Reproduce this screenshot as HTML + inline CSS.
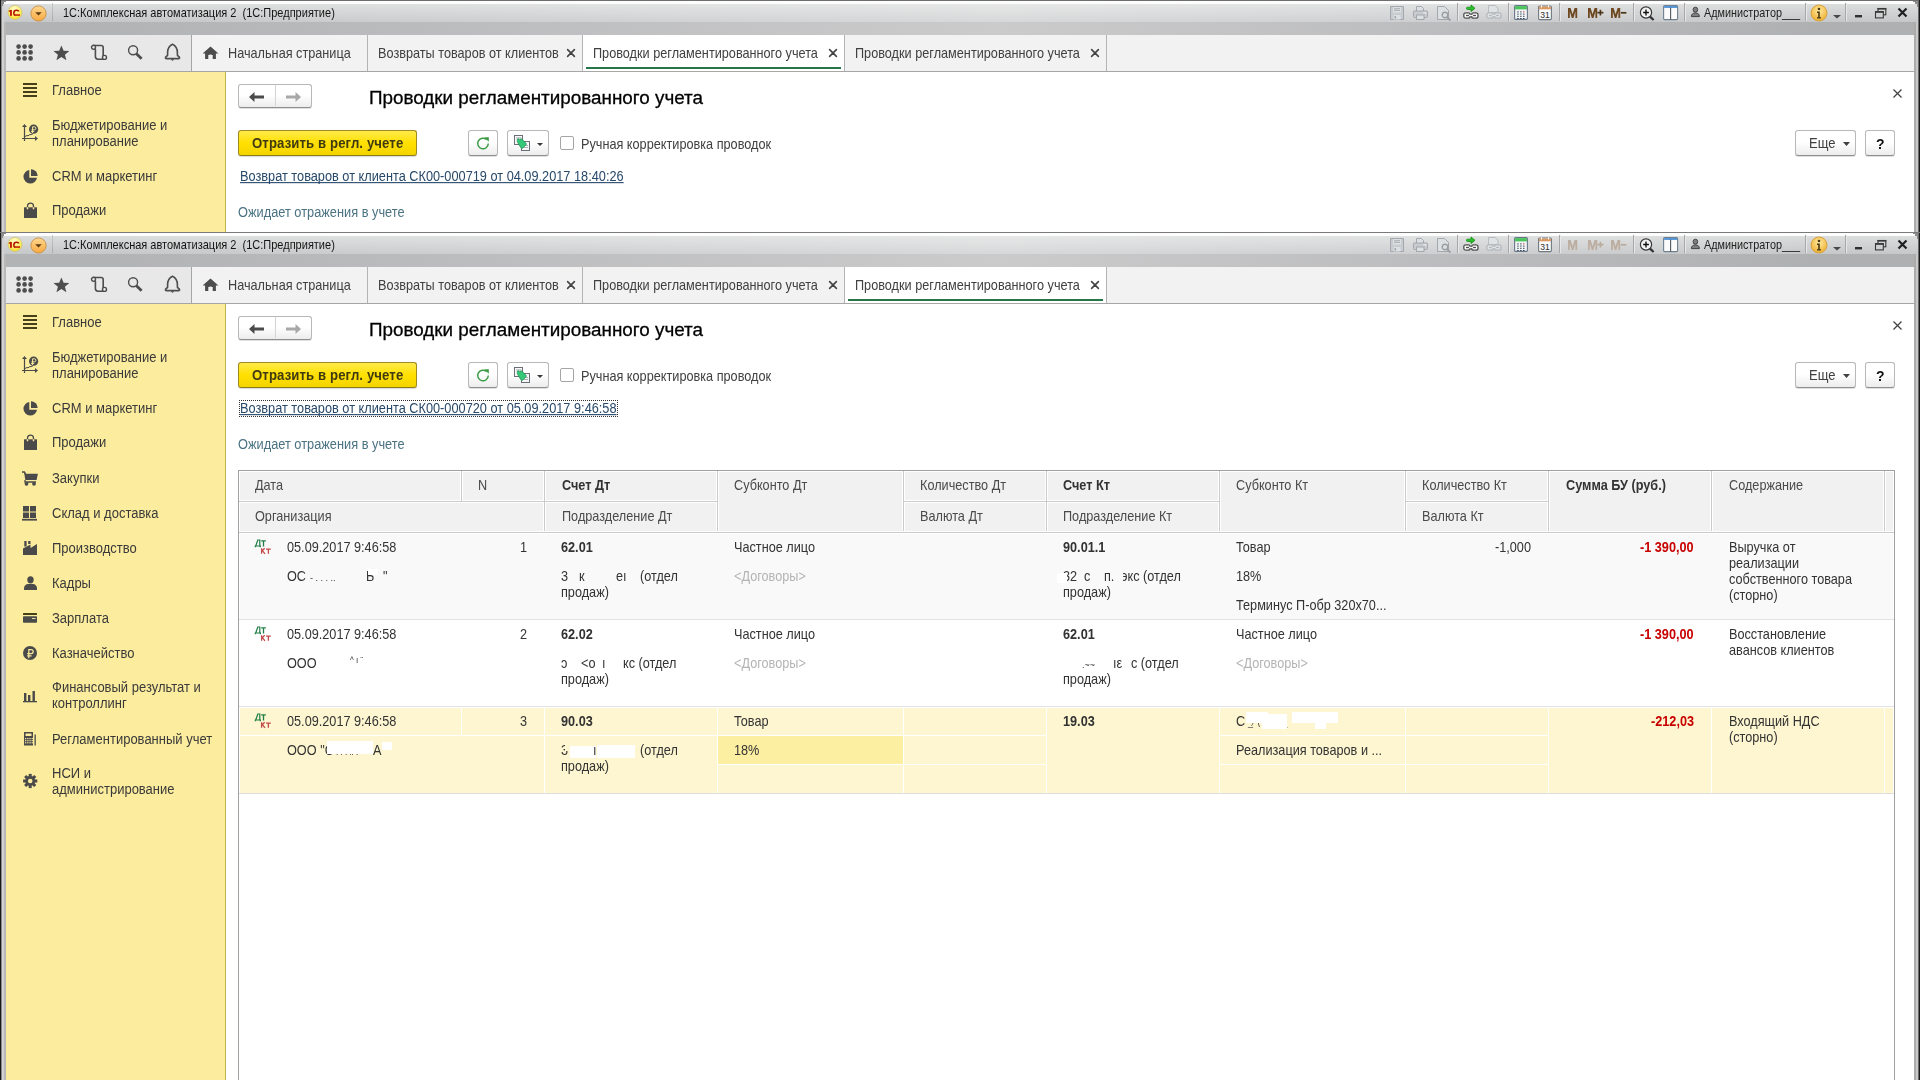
<!DOCTYPE html><html><head><meta charset="utf-8"><style>
html,body{margin:0;padding:0;width:1920px;height:1080px;overflow:hidden;background:#fff;}
body{position:relative;font-family:"Liberation Sans", sans-serif;}
.t{position:absolute;white-space:nowrap;font-family:"Liberation Sans", sans-serif;will-change:transform;}
.r{position:absolute;}
.s{position:absolute;overflow:visible;}
.btn{position:absolute;border:1px solid #b8b8b8;border-bottom-color:#8e8e8e;border-radius:3px;background:linear-gradient(#ffffff 45%,#ededed);box-shadow:0 1px 0 rgba(0,0,0,0.12);}
.ybtn{position:absolute;border:1px solid #a08c1e;border-bottom-color:#8e7c18;border-radius:3px;background:linear-gradient(#ffea4c,#ffe000 50%,#f4d400);box-shadow:0 1px 1px rgba(0,0,0,0.15);}
.cb{position:absolute;border:1px solid #a6a6a6;border-radius:2px;background:#fff;}
</style></head><body>
<div class="r" style="left:0px;top:0px;width:1920px;height:1px;background:#6e6e6e;"></div>
<div class="r" style="left:0px;top:1px;width:1920px;height:3px;background:#fdfdfd;"></div>
<div class="r" style="left:0px;top:4px;width:1920px;height:18px;background:linear-gradient(90deg,rgba(255,255,255,0) 5%,rgba(255,255,255,0.3) 52%,rgba(255,255,255,0) 95%),linear-gradient(#dcdddd,#c6c7c9);"></div>
<div class="r" style="left:0px;top:22px;width:1920px;height:13px;background:linear-gradient(90deg,#b2b3b5 5%,#cbcbcc 52%,#afb0b2 95%);"></div>
<svg class="s" style="left:7px;top:5px;" width="17" height="17" viewBox="0 0 17 17"><defs><radialGradient id="lg" cx="45%" cy="25%" r="80%"><stop offset="0" stop-color="#fffcc8"/><stop offset="0.55" stop-color="#fff070"/><stop offset="1" stop-color="#fad820"/></radialGradient></defs><circle cx="8" cy="7.4" r="7" fill="url(#lg)" stroke="#c8c070" stroke-width="0.7"/><rect x="3" y="5" width="1.9" height="5.8" fill="#c01a08"/><path d="M1.9 6.7l1.5-1.5" stroke="#c01a08" stroke-width="1.2"/><path d="M11.6 6.6Q11.6 5.3 9.6 5.3Q6.8 5.3 6.8 7.9Q6.8 10.2 8.4 10.2" stroke="#b01000" stroke-width="1.5" fill="none"/><rect x="7.6" y="9.3" width="5.4" height="1.5" fill="#c01a08"/></svg>
<svg class="s" style="left:30px;top:5px;" width="17" height="17" viewBox="0 0 17 17"><defs><linearGradient id="dg" x1="0" y1="0" x2="0" y2="1"><stop offset="0" stop-color="#ffd890"/><stop offset="1" stop-color="#f8a840"/></linearGradient></defs><circle cx="8.5" cy="8.5" r="7.6" fill="url(#dg)" stroke="#c89040" stroke-width="0.9"/><path d="M5.2 7.2h6.6l-3.3 3.4z" fill="#5a3a10"/></svg>
<div class="r" style="left:52px;top:3px;width:1px;height:18px;background:linear-gradient(#c8c8c8,#a8a8a8);"></div>
<div class="t" style="left:63px;top:6.36px;font-size:11px;line-height:14px;color:#141414;transform:scaleY(1.12);transform-origin:0 10.64px;">1С:Комплексная автоматизация 2&nbsp; (1С:Предприятие)</div>
<svg class="s" style="left:1390px;top:6px;" width="14" height="14" viewBox="0 0 14 14"><path d="M.5 .5h13v13h-13z" fill="#c8ccd0" stroke="#a4a8ac"/><rect x="3" y="1" width="8" height="5.5" fill="#dde0e3"/><path d="M4 2.7h6M4 4.4h6" stroke="#a4a8ac" stroke-width=".9"/><rect x="3.5" y="9" width="7" height="4.5" fill="#dde0e3"/><rect x="4.5" y="10" width="1.6" height="2.6" fill="#a4a8ac"/></svg>
<svg class="s" style="left:1413px;top:6px;" width="15" height="14" viewBox="0 0 15 14"><path d="M3.5 .5h5l2 2v3h-7z" fill="#dde0e3" stroke="#a4a8ac"/><rect x=".5" y="5" width="14" height="6.5" rx="1" fill="#c8ccd0" stroke="#a4a8ac"/><rect x="3.5" y="9" width="7.5" height="4.5" fill="#dde0e3" stroke="#a4a8ac"/><rect x="10.5" y="6.3" width="1.2" height="1" fill="#fff"/><rect x="12.2" y="6.3" width="1.2" height="1" fill="#fff"/></svg>
<svg class="s" style="left:1437px;top:6px;" width="15" height="16" viewBox="0 0 15 16"><path d="M.5 .5h7l4 4v9h-11z" fill="#dde0e3" stroke="#a4a8ac"/><circle cx="8" cy="9" r="2.8" fill="#dde0e3" stroke="#9a9ea2" stroke-width="1.4"/><path d="M10 11l3.5 3.6" stroke="#9a9ea2" stroke-width="1.8"/></svg>
<div class="r" style="left:1457px;top:3px;width:1px;height:18px;background:#a8a8a8;"></div>
<div class="r" style="left:1458px;top:3px;width:1px;height:18px;background:#e8e8e8;"></div>
<svg class="s" style="left:1463px;top:4px;" width="17" height="16" viewBox="0 0 17 16"><path d="M4.6 3.2h3.4V1l4 3.3-4 3.3V5.5H4.6a1.15 1.15 0 0 1 0-2.3z" fill="#2cc02c" stroke="#108a10" stroke-width=".8"/><rect x=".8" y="8.8" width="6.4" height="5.4" rx="2" fill="#f8f8f8" stroke="#505050" stroke-width="1.3"/><rect x="8.6" y="8.8" width="6.4" height="5.4" rx="2" fill="#f8f8f8" stroke="#505050" stroke-width="1.3"/><path d="M3 11.5h10" stroke="#505050" stroke-width="1.3"/><path d="M6 11.5h4" stroke="#f8f8f8" stroke-width="1.2"/></svg>
<svg class="s" style="left:1486px;top:4px;" width="17" height="16" viewBox="0 0 17 16"><path d="M2.5 1.5h6.5l3 2.5v4.5h-9.5z" fill="#e0e3e6" stroke="#b8bcc0"/><rect x=".8" y="8.8" width="6.4" height="5.4" rx="2" fill="#e0e3e6" stroke="#b4b8bc" stroke-width="1.3"/><rect x="8.6" y="8.8" width="6.4" height="5.4" rx="2" fill="#e0e3e6" stroke="#b4b8bc" stroke-width="1.3"/><path d="M3 11.5h10" stroke="#b4b8bc" stroke-width="1.3"/><path d="M6 11.5h4" stroke="#e0e3e6" stroke-width="1.2"/></svg>
<div class="r" style="left:1508px;top:3px;width:1px;height:18px;background:#a8a8a8;"></div>
<div class="r" style="left:1509px;top:3px;width:1px;height:18px;background:#e8e8e8;"></div>
<svg class="s" style="left:1514px;top:5px;" width="14" height="16" viewBox="0 0 14 16"><rect x=".6" y=".6" width="12.8" height="13.8" rx="1" fill="#f2f4f6" stroke="#687888" stroke-width="1.1"/><rect x="1.1" y="1.1" width="11.8" height="3.3" fill="#4cc45c"/><rect x="3.2" y="6.4" width="1.5" height="1" fill="#384858"/><rect x="3.2" y="8.6" width="1.5" height="1" fill="#384858"/><rect x="3.2" y="10.8" width="1.5" height="1" fill="#384858"/><rect x="3.2" y="13.0" width="1.5" height="1" fill="#384858"/><rect x="6.1" y="6.4" width="1.5" height="1" fill="#384858"/><rect x="6.1" y="8.6" width="1.5" height="1" fill="#384858"/><rect x="6.1" y="10.8" width="1.5" height="1" fill="#384858"/><rect x="6.1" y="13.0" width="1.5" height="1" fill="#384858"/><rect x="9.0" y="6.4" width="1.5" height="1" fill="#c04040"/><rect x="9.0" y="8.6" width="1.5" height="1" fill="#384858"/><rect x="9.0" y="10.8" width="1.5" height="1" fill="#384858"/><rect x="9.0" y="13.0" width="1.5" height="1" fill="#384858"/></svg>
<svg class="s" style="left:1538px;top:5px;" width="14" height="16" viewBox="0 0 14 16"><rect x=".6" y="1" width="12.8" height="13.6" rx="1" fill="#fbfbfb" stroke="#707880" stroke-width="1.1"/><rect x="1.1" y="1.5" width="11.8" height="2.8" fill="#d89a60"/><path d="M3.5 .3v2.2M10.5 .3v2.2" stroke="#fff" stroke-width="1"/><text x="2.2" y="12.6" font-family="Liberation Sans" font-size="8.6" fill="#303030">31</text></svg>
<div class="r" style="left:1559px;top:3px;width:1px;height:18px;background:#a8a8a8;"></div>
<div class="r" style="left:1560px;top:3px;width:1px;height:18px;background:#e8e8e8;"></div>
<svg class="s" style="left:1568px;top:8px;" width="10" height="10" viewBox="0 0 10 10"><path d="M0 10V0h2.6l2 6.2 2-6.2h2.6v10H7.4V3.6l-2 6.4H3.8l-2-6.4V10z" fill="#6e4a22"/></svg>
<svg class="s" style="left:1588px;top:8px;" width="17" height="10" viewBox="0 0 17 10"><path d="M0 10V0h2.6l2 6.2 2-6.2h2.6v10H7.4V3.6l-2 6.4H3.8l-2-6.4V10z" fill="#6e4a22"/><path d="M9.4 4.6h6M12.4 1.8v5.6" stroke="#4a3418" stroke-width="1.6"/></svg>
<svg class="s" style="left:1611px;top:8px;" width="16" height="10" viewBox="0 0 16 10"><path d="M0 10V0h2.6l2 6.2 2-6.2h2.6v10H7.4V3.6l-2 6.4H3.8l-2-6.4V10z" fill="#6e4a22"/><path d="M9.8 4.8h5.6" stroke="#4a3418" stroke-width="1.7"/></svg>
<div class="r" style="left:1633px;top:3px;width:1px;height:18px;background:#a8a8a8;"></div>
<div class="r" style="left:1634px;top:3px;width:1px;height:18px;background:#e8e8e8;"></div>
<svg class="s" style="left:1639px;top:6px;" width="16" height="15" viewBox="0 0 16 15"><circle cx="7" cy="6.5" r="5.6" fill="#f4f4f4" stroke="#383838" stroke-width="1.2"/><path d="M7 3.6v5.8M4.1 6.5h5.8" stroke="#101010" stroke-width="1.4"/><path d="M11 10.6l3.6 3.4" stroke="#303030" stroke-width="2.2"/></svg>
<svg class="s" style="left:1663px;top:5px;" width="16" height="15" viewBox="0 0 16 15"><rect x=".6" y=".6" width="14" height="14" rx="1" fill="#fbfbfb" stroke="#708090" stroke-width="1.1"/><rect x="1.1" y="1.1" width="13" height="1.8" fill="#4a90d8"/><path d="M7.6 2.5v12" stroke="#505860" stroke-width="1.1"/></svg>
<div class="r" style="left:1684px;top:3px;width:1px;height:18px;background:#a8a8a8;"></div>
<div class="r" style="left:1685px;top:3px;width:1px;height:18px;background:#e8e8e8;"></div>
<svg class="s" style="left:1691px;top:7px;" width="9" height="10" viewBox="0 0 9 10"><ellipse cx="4.4" cy="2.7" rx="2.3" ry="2.5" fill="#808080" stroke="#383838" stroke-width=".9"/><path d="M.4 9.6c0-2.5 1.6-3.7 4-3.7s4 1.2 4 3.7z" fill="#808080" stroke="#383838" stroke-width=".9"/></svg>
<div class="t" style="left:1704px;top:6.43px;font-size:10.8px;line-height:14px;color:#202020;transform:scaleY(1.12);transform-origin:0 10.57px;">Администратор___</div>
<div class="r" style="left:1805px;top:3px;width:1px;height:18px;background:#a8a8a8;"></div>
<div class="r" style="left:1806px;top:3px;width:1px;height:18px;background:#e8e8e8;"></div>
<svg class="s" style="left:1810px;top:4px;" width="18" height="18" viewBox="0 0 18 18"><defs><radialGradient id="ig" cx="50%" cy="35%" r="65%"><stop offset="0" stop-color="#ffe9a0"/><stop offset="1" stop-color="#f0b030"/></radialGradient></defs><circle cx="9" cy="9" r="8" fill="url(#ig)" stroke="#d09a30" stroke-width=".8"/><circle cx="9" cy="5" r="1.3" fill="#4a3c14"/><path d="M7 7.6h2.8v5.6h1.2v1.3H7v-1.3h1.2V8.9H7z" fill="#4a3c14"/></svg>
<svg class="s" style="left:1833px;top:14.5px;" width="8" height="4" viewBox="0 0 8 4"><path d="M0 0h8l-4 3.6z" fill="#484848"/></svg>
<div class="r" style="left:1845px;top:3px;width:1px;height:18px;background:#a8a8a8;"></div>
<div class="r" style="left:1846px;top:3px;width:1px;height:18px;background:#e8e8e8;"></div>
<div class="r" style="left:1855px;top:15px;width:7px;height:2px;background:#303030;"></div>
<div class="r" style="left:1855px;top:17px;width:7px;height:1px;background:#8a8a8a;"></div>
<svg class="s" style="left:1874px;top:7px;" width="13" height="12" viewBox="0 0 13 12"><rect x="4" y="1.5" width="7.8" height="6.3" fill="none" stroke="#383838" stroke-width="1.1"/><rect x="1.5" y="4.6" width="7.8" height="6.3" fill="#cfd0d2" stroke="#383838" stroke-width="1.1"/><rect x="1" y="4" width="8.8" height="1.8" fill="#383838"/><rect x="3.5" y="1" width="8.8" height="1.6" fill="#383838"/></svg>
<svg class="s" style="left:1897px;top:7px;" width="11" height="11" viewBox="0 0 11 11"><path d="M1.5 1.5l8 8M9.5 1.5l-8 8" stroke="#202020" stroke-width="2.2"/></svg>
<div class="r" style="left:0px;top:0px;width:1px;height:1080px;background:#1a1a1a;"></div>
<div class="r" style="left:1px;top:1px;width:1px;height:1079px;background:#8a8a8a;"></div>
<div class="r" style="left:2px;top:1px;width:2px;height:1079px;background:#d2d2d2;"></div>
<div class="r" style="left:4px;top:22px;width:2px;height:1058px;background:#b8b8b8;"></div>
<div class="r" style="left:1919px;top:0px;width:1px;height:1080px;background:#1a1a1a;"></div>
<div class="r" style="left:1918px;top:1px;width:1px;height:1079px;background:#6a6a6a;"></div>
<div class="r" style="left:1916px;top:22px;width:2px;height:1058px;background:#c8c8c8;"></div>
<div class="r" style="left:1914px;top:22px;width:2px;height:1058px;background:#ababab;"></div>
<div class="r" style="left:2px;top:1px;width:4px;height:1px;background:#8c8c8c;"></div>
<div class="r" style="left:2px;top:2px;width:2px;height:2px;background:#8c8c8c;"></div>
<div class="r" style="left:2px;top:4px;width:1px;height:2px;background:#8c8c8c;"></div>
<div class="r" style="left:1913px;top:1px;width:5px;height:1px;background:#8c8c8c;"></div>
<div class="r" style="left:1915px;top:2px;width:3px;height:2px;background:#8c8c8c;"></div>
<div class="r" style="left:1917px;top:4px;width:1px;height:3px;background:#8c8c8c;"></div>
<div class="r" style="left:6px;top:35px;width:1908px;height:36px;background:#f2f2f2;"></div>
<div class="r" style="left:6px;top:35px;width:185px;height:36px;background:#e8e8e8;"></div>
<div class="r" style="left:6px;top:71px;width:1908px;height:1px;background:#a6a6a6;"></div>
<div class="r" style="left:191px;top:35px;width:1px;height:36px;background:#a6a6a6;"></div>
<div class="r" style="left:367px;top:35px;width:1px;height:36px;background:#b4b4b4;"></div>
<div class="r" style="left:582px;top:35px;width:1px;height:36px;background:#b4b4b4;"></div>
<div class="r" style="left:844px;top:35px;width:1px;height:36px;background:#b4b4b4;"></div>
<div class="r" style="left:1106px;top:35px;width:1px;height:36px;background:#b4b4b4;"></div>
<div class="r" style="left:583px;top:35px;width:261px;height:36px;background:#ffffff;"></div>
<div class="r" style="left:586px;top:67px;width:255px;height:2px;background:#25774a;"></div>
<svg class="s" style="left:16px;top:44px;" width="18" height="18" viewBox="0 0 18 18"><circle cx="2.6" cy="2.6" r="2.3" fill="#4d4d4d"/><circle cx="2.6" cy="8.4" r="2.3" fill="#4d4d4d"/><circle cx="2.6" cy="14.4" r="2.3" fill="#4d4d4d"/><circle cx="8.6" cy="2.6" r="2.3" fill="#4d4d4d"/><circle cx="8.6" cy="8.4" r="2.3" fill="#4d4d4d"/><circle cx="8.6" cy="14.4" r="2.3" fill="#4d4d4d"/><circle cx="14.6" cy="2.6" r="2.3" fill="#4d4d4d"/><circle cx="14.6" cy="8.4" r="2.3" fill="#4d4d4d"/><circle cx="14.6" cy="14.4" r="2.3" fill="#4d4d4d"/></svg>
<svg class="s" style="left:53px;top:45px;" width="17" height="17" viewBox="0 0 17 17"><path d="M8.4 0.5l2.2 5.3 5.7.3-4.4 3.6 1.5 5.6-5-3.2-5 3.2 1.5-5.6L.5 6.1l5.7-.3z" fill="#4d4d4d"/></svg>
<svg class="s" style="left:90px;top:44px;" width="18" height="18" viewBox="0 0 18 18"><path d="M3.5 1.5H11q2.2 0 2.2 2.2v9.6M5.4 5v7.6q0 2.6 2.6 2.6h6.4" stroke="#4d4d4d" stroke-width="1.6" fill="none"/><circle cx="3.5" cy="3.3" r="2" fill="#e8e8e8" stroke="#4d4d4d" stroke-width="1.4"/><circle cx="14.5" cy="13.4" r="2" fill="#e8e8e8" stroke="#4d4d4d" stroke-width="1.4"/></svg>
<svg class="s" style="left:126px;top:44px;" width="18" height="18" viewBox="0 0 18 18"><circle cx="7.1" cy="6.2" r="4.5" stroke="#4d4d4d" stroke-width="1.4" fill="none"/><path d="M10.4 9.8l5.2 5" stroke="#4d4d4d" stroke-width="2.8"/></svg>
<svg class="s" style="left:163px;top:43px;" width="19" height="19" viewBox="0 0 19 19"><path d="M9.5 1.3C6.2 3 4.6 6 4.6 9.5v2.8l-2 1.9q-.6 1.4 1 1.4h11.8q1.6 0 1-1.4l-2-1.9V9.5c0-3.5-1.6-6.5-4.9-8.2z" stroke="#4d4d4d" stroke-width="1.6" fill="none" stroke-linejoin="round"/><path d="M7.8 16.2h3.4l-1.7 1.7z" fill="#4d4d4d"/></svg>
<svg class="s" style="left:202px;top:46px;" width="17" height="14" viewBox="0 0 17 14"><path d="M8.5 .6L.6 7.4h2.5V13h3.2V9h4.4v4h3.2V7.4h2.5z" fill="#4d4d4d"/><rect x="7.2" y="8.6" width="2.6" height="4.4" fill="#f2f2f2"/></svg>
<div class="t" style="left:228px;top:46.10px;font-size:12.7px;line-height:16px;color:#404040;transform:scaleY(1.1);transform-origin:0 12.20px;">Начальная страница</div>
<div class="t" style="left:378px;top:46.10px;font-size:12.7px;line-height:16px;color:#404040;transform:scaleY(1.1);transform-origin:0 12.20px;">Возвраты товаров от клиентов</div>
<div class="t" style="left:593px;top:46.10px;font-size:12.7px;line-height:16px;color:#404040;transform:scaleY(1.1);transform-origin:0 12.20px;">Проводки регламентированного учета</div>
<div class="t" style="left:855px;top:46.10px;font-size:12.7px;line-height:16px;color:#404040;transform:scaleY(1.1);transform-origin:0 12.20px;">Проводки регламентированного учета</div>
<svg class="s" style="left:565.5px;top:47.5px;" width="10" height="10" viewBox="0 0 10 10"><path d="M1.6 1.6l6.8 6.8M8.4 1.6l-6.8 6.8" stroke="#444" stroke-width="1.6" stroke-linecap="round"/></svg>
<svg class="s" style="left:827.5px;top:47.5px;" width="10" height="10" viewBox="0 0 10 10"><path d="M1.6 1.6l6.8 6.8M8.4 1.6l-6.8 6.8" stroke="#444" stroke-width="1.6" stroke-linecap="round"/></svg>
<svg class="s" style="left:1089.5px;top:47.5px;" width="10" height="10" viewBox="0 0 10 10"><path d="M1.6 1.6l6.8 6.8M8.4 1.6l-6.8 6.8" stroke="#444" stroke-width="1.6" stroke-linecap="round"/></svg>
<div class="r" style="left:6px;top:72px;width:219px;height:1008px;background:#fbec9e;"></div>
<div class="r" style="left:224px;top:72px;width:1px;height:1008px;background:#fdf08c;"></div>
<div class="r" style="left:225px;top:72px;width:1px;height:1008px;background:#c2b25c;"></div>
<div class="t" style="left:52px;top:82.70px;font-size:13px;line-height:16px;color:#3a3a3a;transform:scaleY(1.1);transform-origin:0 12.30px;">Главное</div>
<div class="t" style="left:52px;top:119.43px;font-size:13px;line-height:14.545px;color:#3a3a3a;transform:scaleY(1.1);transform-origin:0 11.57px;">Бюджетирование и<br>планирование</div>
<div class="t" style="left:52px;top:168.70px;font-size:13px;line-height:16px;color:#3a3a3a;transform:scaleY(1.1);transform-origin:0 12.30px;">CRM и маркетинг</div>
<div class="t" style="left:52px;top:203.20px;font-size:13px;line-height:16px;color:#3a3a3a;transform:scaleY(1.1);transform-origin:0 12.30px;">Продажи</div>
<div class="t" style="left:52px;top:238.70px;font-size:13px;line-height:16px;color:#3a3a3a;transform:scaleY(1.1);transform-origin:0 12.30px;">Закупки</div>
<div class="t" style="left:52px;top:273.70px;font-size:13px;line-height:16px;color:#3a3a3a;transform:scaleY(1.1);transform-origin:0 12.30px;">Склад и доставка</div>
<div class="t" style="left:52px;top:308.70px;font-size:13px;line-height:16px;color:#3a3a3a;transform:scaleY(1.1);transform-origin:0 12.30px;">Производство</div>
<div class="t" style="left:52px;top:343.70px;font-size:13px;line-height:16px;color:#3a3a3a;transform:scaleY(1.1);transform-origin:0 12.30px;">Кадры</div>
<div class="t" style="left:52px;top:378.70px;font-size:13px;line-height:16px;color:#3a3a3a;transform:scaleY(1.1);transform-origin:0 12.30px;">Зарплата</div>
<div class="t" style="left:52px;top:413.70px;font-size:13px;line-height:16px;color:#3a3a3a;transform:scaleY(1.1);transform-origin:0 12.30px;">Казначейство</div>
<div class="t" style="left:52px;top:449.43px;font-size:13px;line-height:14.545px;color:#3a3a3a;transform:scaleY(1.1);transform-origin:0 11.57px;">Финансовый результат и<br>контроллинг</div>
<div class="t" style="left:52px;top:499.70px;font-size:13px;line-height:16px;color:#3a3a3a;transform:scaleY(1.1);transform-origin:0 12.30px;">Регламентированный учет</div>
<div class="t" style="left:52px;top:535.43px;font-size:13px;line-height:14.545px;color:#3a3a3a;transform:scaleY(1.1);transform-origin:0 11.57px;">НСИ и<br>администрирование</div>
<svg class="s" style="left:23px;top:83px;" width="14" height="14" viewBox="0 0 14 14"><rect x="0" y="0" width="14" height="2" fill="#45401a"/><rect x="0" y="4" width="14" height="2" fill="#45401a"/><rect x="0" y="8" width="14" height="2" fill="#45401a"/><rect x="0" y="12" width="14" height="2" fill="#45401a"/></svg>
<svg class="s" style="left:22px;top:124px;" width="17" height="17" viewBox="0 0 17 17"><path d="M2.5 2v15M0 14.5h14" stroke="#4a4a4a" stroke-width="1.2"/><path d="M2.5 0l-2.5 3h5z" fill="#4a4a4a"/><path d="M16 14.5l-3-2.5v5z" fill="#4a4a4a"/><path d="M3 12.5l2-1 1 .3 2-1.3 1 .2 2-1" stroke="#4a4a4a" stroke-width="1" fill="none"/><circle cx="11.6" cy="5.2" r="4.6" fill="#4a4a4a"/><path d="M10.6 9V2.8h1.8a1.5 1.5 0 0 1 0 3h-2.8M9 7.4h3.3" stroke="#fbec9e" stroke-width="1" fill="none"/></svg>
<svg class="s" style="left:23px;top:169px;" width="15" height="15" viewBox="0 0 15 15"><path d="M6.3 1A6.8 6.8 0 1 0 14 8.7H6.3z" fill="#4a4a4a"/><path d="M8 0.2A6.8 6.8 0 0 1 14.7 7H8z" fill="#4a4a4a"/></svg>
<svg class="s" style="left:24px;top:203px;" width="13" height="15" viewBox="0 0 13 15"><path d="M3.5 5V3.2a3 3 0 0 1 6 0V5" stroke="#4a4a4a" stroke-width="1.3" fill="none"/><rect x="0" y="4.3" width="13" height="10.7" fill="#4a4a4a"/><path d="M3.5 4.3v2M9.5 4.3v2" stroke="#fbec9e" stroke-width="1.5"/></svg>
<svg class="s" style="left:22px;top:239px;" width="17" height="15" viewBox="0 0 17 15"><path d="M0 1h2.3l1.2 2" stroke="#4a4a4a" stroke-width="1.6" fill="none"/><path d="M2.3 2.8h13.6l-1.3 6.3H3.3z" fill="#4a4a4a"/><path d="M3 9v2h11" stroke="#4a4a4a" stroke-width="1.3" fill="none"/><circle cx="4.5" cy="12.8" r="1.9" fill="#4a4a4a"/><circle cx="12" cy="12.8" r="1.9" fill="#4a4a4a"/></svg>
<svg class="s" style="left:22px;top:274px;" width="16" height="15" viewBox="0 0 16 15"><rect x="1" y="0" width="6" height="5.5" fill="#4a4a4a"/><rect x="8" y="0" width="6" height="5.5" fill="#4a4a4a"/><rect x="1" y="6.5" width="6" height="5.5" fill="#4a4a4a"/><rect x="8" y="6.5" width="6" height="5.5" fill="#4a4a4a"/><rect x="0" y="12.8" width="15" height="1.8" fill="#4a4a4a"/></svg>
<svg class="s" style="left:23px;top:309px;" width="15" height="15" viewBox="0 0 15 15"><path d="M1.3 0h2.3v5.5H1.3zM5.2 0h2.3v3H5.2z" fill="#4a4a4a"/><path d="M0 7.5l7.5-4v3.6l6.5-4.2V14H0z" fill="#4a4a4a"/></svg>
<svg class="s" style="left:24px;top:344px;" width="13" height="14" viewBox="0 0 13 14"><ellipse cx="6.5" cy="3.8" rx="3.2" ry="3.6" fill="#4a4a4a"/><path d="M0 12.2c0-2.6 2-4 4-4.2h5c2 .2 4 1.6 4 4.2V14H0z" fill="#4a4a4a"/></svg>
<svg class="s" style="left:23px;top:381px;" width="15" height="11" viewBox="0 0 15 11"><rect x="0" y="0" width="14" height="2" rx=".5" fill="#45401a"/><rect x="0" y="3.2" width="14" height="6.6" rx=".7" fill="#4a4a4a"/><rect x="9" y="5" width="3.5" height="1" fill="#e8e0b0"/></svg>
<svg class="s" style="left:23px;top:414px;" width="15" height="15" viewBox="0 0 15 15"><circle cx="7" cy="7" r="7" fill="#4a4a4a"/><path d="M5.8 12.2V3.6h2.4a2 2 0 0 1 0 4H4.2M4.2 9.8h4.4" stroke="#fbec9e" stroke-width="1.2" fill="none"/></svg>
<svg class="s" style="left:23px;top:459px;" width="15" height="12" viewBox="0 0 15 12"><rect x="1" y="2" width="2.4" height="8.5" fill="#4a4a4a"/><rect x="5" y="4" width="2.4" height="6.5" fill="#4a4a4a"/><rect x="9.5" y="0" width="2.4" height="10.5" fill="#4a4a4a"/><rect x="0" y="10" width="14" height="1.3" fill="#4a4a4a"/></svg>
<svg class="s" style="left:23px;top:499px;" width="14" height="15" viewBox="0 0 14 15"><rect x="1" y="1" width="9" height="13.5" fill="#4a4a4a"/><rect x="2.5" y="2.5" width="6" height="2.5" fill="#fbec9e"/><rect x="2.0" y="7.0" width="1.3" height="1.2" fill="#fbec9e"/><rect x="2.0" y="9.1" width="1.3" height="1.2" fill="#fbec9e"/><rect x="2.0" y="11.2" width="1.3" height="1.2" fill="#fbec9e"/><rect x="4.2" y="7.0" width="1.3" height="1.2" fill="#fbec9e"/><rect x="4.2" y="9.1" width="1.3" height="1.2" fill="#fbec9e"/><rect x="4.2" y="11.2" width="1.3" height="1.2" fill="#fbec9e"/><rect x="6.4" y="7.0" width="1.3" height="1.2" fill="#fbec9e"/><rect x="6.4" y="9.1" width="1.3" height="1.2" fill="#fbec9e"/><rect x="6.4" y="11.2" width="1.3" height="1.2" fill="#fbec9e"/><rect x="8.600000000000001" y="7.0" width="1.3" height="1.2" fill="#fbec9e"/><rect x="8.600000000000001" y="9.1" width="1.3" height="1.2" fill="#fbec9e"/><rect x="8.600000000000001" y="11.2" width="1.3" height="1.2" fill="#fbec9e"/><rect x="11.5" y="3.5" width="1.3" height="11" fill="#4a4a4a"/></svg>
<svg class="s" style="left:23px;top:542px;" width="15" height="15" viewBox="0 0 15 15"><rect x="11.30" y="5.50" width="3" height="3" fill="#4a4a4a" transform="rotate(0 12.80 7.00)"/><rect x="9.66" y="9.46" width="3" height="3" fill="#4a4a4a" transform="rotate(45 11.16 10.96)"/><rect x="5.70" y="11.10" width="3" height="3" fill="#4a4a4a" transform="rotate(90 7.20 12.60)"/><rect x="1.74" y="9.46" width="3" height="3" fill="#4a4a4a" transform="rotate(135 3.24 10.96)"/><rect x="0.10" y="5.50" width="3" height="3" fill="#4a4a4a" transform="rotate(180 1.60 7.00)"/><rect x="1.74" y="1.54" width="3" height="3" fill="#4a4a4a" transform="rotate(225 3.24 3.04)"/><rect x="5.70" y="-0.10" width="3" height="3" fill="#4a4a4a" transform="rotate(270 7.20 1.40)"/><rect x="9.66" y="1.54" width="3" height="3" fill="#4a4a4a" transform="rotate(315 11.16 3.04)"/><circle cx="7.2" cy="7" r="5" fill="#4a4a4a"/><circle cx="7.2" cy="7" r="2.3" fill="#fbec9e"/></svg>
<div class="r" style="left:226px;top:72px;width:1688px;height:1008px;background:#ffffff;"></div>
<div class="btn" style="left:238px;top:84px;width:72px;height:22px;"></div>
<div class="r" style="left:275px;top:85px;width:1px;height:21px;background:#d4d4d4;"></div>
<svg class="s" style="left:248px;top:90.5px;" width="18" height="12" viewBox="0 0 18 12"><path d="M1 6l5.5-5v3.4H16v3.2H6.5V11z" fill="#4a4a4a"/></svg>
<svg class="s" style="left:284px;top:90.5px;" width="18" height="12" viewBox="0 0 18 12"><path d="M17 6l-5.5-5v3.4H2v3.2h9.5V11z" fill="#a8a8a8"/></svg>
<div class="t" style="left:369px;top:87.07px;font-size:18.85px;line-height:22px;color:#000000;-webkit-text-stroke:0.3px #000;">Проводки регламентированного учета</div>
<svg class="s" style="left:1892px;top:88px;" width="11" height="11" viewBox="0 0 11 11"><path d="M1.5 1.5l8 8M9.5 1.5l-8 8" stroke="#404040" stroke-width="1.2"/></svg>
<div class="ybtn" style="left:238px;top:130px;width:177px;height:24px;"></div>
<div class="t" style="left:252px;top:136.24px;font-size:13.2px;line-height:16px;color:#3f3a10;font-weight:700;transform:scaleY(1.1);transform-origin:0 12.36px;letter-spacing:0.1px;">Отразить в регл. учете</div>
<div class="btn" style="left:468px;top:130px;width:28px;height:24px;"></div>
<svg class="s" style="left:474px;top:135px;" width="17" height="17" viewBox="0 0 17 17"><path d="M12.6 4.6A5.3 5.3 0 1 0 14.3 8.6" stroke="#3c9c44" stroke-width="1.5" fill="none"/><path d="M10.2 2.2h4.6v4.6z" fill="#3c9c44"/></svg>
<div class="btn" style="left:507px;top:130px;width:40px;height:24px;"></div>
<svg class="s" style="left:513px;top:134px;" width="20" height="19" viewBox="0 0 20 19"><rect x="1.5" y="1.5" width="8" height="9" fill="#f8f8f8" stroke="#6a7078"/><path d="M3 3.9h5" stroke="#a8b0b8"/><rect x="8.5" y="7.5" width="8" height="9" fill="#f8f8f8" stroke="#6a7078"/><path d="M11 11.5h4M11 13.5h4" stroke="#a8b0b8"/><path d="M4.3 5.6c0-1 1.1-1.3 1.7-.6l1 1.2.3-.9c.5-.6 1.4-.6 1.9 0l3.6 3.8c.6.6.6 1.3 0 1.9l-2.9 3c-.6.6-1.3.6-1.8 0L4.6 8.4c-.3-.4-.4-.8-.3-1.2z" fill="#35c878" stroke="#1f8a50" stroke-width=".7"/></svg>
<svg class="s" style="left:536.5px;top:143px;" width="6" height="4" viewBox="0 0 6 4"><path d="M0 0h6l-3 3z" fill="#383838"/></svg>
<div class="cb" style="left:560px;top:136px;width:12px;height:12px;"></div>
<div class="t" style="left:581px;top:137.00px;font-size:12.7px;line-height:16px;color:#404040;transform:scaleY(1.1);transform-origin:0 12.20px;">Ручная корректировка проводок</div>
<div class="btn" style="left:1795px;top:130px;width:59px;height:24px;"></div>
<div class="t" style="left:1809px;top:135.50px;font-size:13px;line-height:16px;color:#404040;transform:scaleY(1.1);transform-origin:0 12.30px;">Еще</div>
<svg class="s" style="left:1843px;top:142px;" width="7" height="4" viewBox="0 0 7 4"><path d="M0 0h7l-3.5 4z" fill="#404040"/></svg>
<div class="btn" style="left:1865px;top:130px;width:28px;height:24px;"></div>
<div class="t" style="left:1875.5px;top:136.37px;font-size:14px;line-height:16px;color:#111111;font-weight:700;">?</div>
<div class="t" style="left:240px;top:169.29px;font-size:12.75px;line-height:16px;color:#28496a;transform:scaleY(1.1);transform-origin:0 12.21px;color:#28496a;text-decoration:underline;text-underline-offset:1px;text-decoration-skip-ink:none;">Возврат товаров от клиента СК00-000719 от 04.09.2017 18:40:26</div>
<div class="t" style="left:238px;top:205.17px;font-size:12.8px;line-height:16px;color:#4a7282;transform:scaleY(1.1);transform-origin:0 12.23px;">Ожидает отражения в учете</div>
<div class="r" style="left:0px;top:232px;width:1920px;height:1px;background:#6e6e6e;"></div>
<div class="r" style="left:0px;top:233px;width:1920px;height:3px;background:#fdfdfd;"></div>
<div class="r" style="left:0px;top:236px;width:1920px;height:18px;background:linear-gradient(90deg,rgba(255,255,255,0) 5%,rgba(255,255,255,0.3) 52%,rgba(255,255,255,0) 95%),linear-gradient(#dcdddd,#c6c7c9);"></div>
<div class="r" style="left:0px;top:254px;width:1920px;height:13px;background:linear-gradient(90deg,#b2b3b5 5%,#cbcbcc 52%,#afb0b2 95%);"></div>
<svg class="s" style="left:7px;top:237px;" width="17" height="17" viewBox="0 0 17 17"><defs><radialGradient id="lg" cx="45%" cy="25%" r="80%"><stop offset="0" stop-color="#fffcc8"/><stop offset="0.55" stop-color="#fff070"/><stop offset="1" stop-color="#fad820"/></radialGradient></defs><circle cx="8" cy="7.4" r="7" fill="url(#lg)" stroke="#c8c070" stroke-width="0.7"/><rect x="3" y="5" width="1.9" height="5.8" fill="#c01a08"/><path d="M1.9 6.7l1.5-1.5" stroke="#c01a08" stroke-width="1.2"/><path d="M11.6 6.6Q11.6 5.3 9.6 5.3Q6.8 5.3 6.8 7.9Q6.8 10.2 8.4 10.2" stroke="#b01000" stroke-width="1.5" fill="none"/><rect x="7.6" y="9.3" width="5.4" height="1.5" fill="#c01a08"/></svg>
<svg class="s" style="left:30px;top:237px;" width="17" height="17" viewBox="0 0 17 17"><defs><linearGradient id="dg" x1="0" y1="0" x2="0" y2="1"><stop offset="0" stop-color="#ffd890"/><stop offset="1" stop-color="#f8a840"/></linearGradient></defs><circle cx="8.5" cy="8.5" r="7.6" fill="url(#dg)" stroke="#c89040" stroke-width="0.9"/><path d="M5.2 7.2h6.6l-3.3 3.4z" fill="#5a3a10"/></svg>
<div class="r" style="left:52px;top:235px;width:1px;height:18px;background:linear-gradient(#c8c8c8,#a8a8a8);"></div>
<div class="t" style="left:63px;top:238.36px;font-size:11px;line-height:14px;color:#141414;transform:scaleY(1.12);transform-origin:0 10.64px;">1С:Комплексная автоматизация 2&nbsp; (1С:Предприятие)</div>
<svg class="s" style="left:1390px;top:238px;" width="14" height="14" viewBox="0 0 14 14"><path d="M.5 .5h13v13h-13z" fill="#c8ccd0" stroke="#a4a8ac"/><rect x="3" y="1" width="8" height="5.5" fill="#dde0e3"/><path d="M4 2.7h6M4 4.4h6" stroke="#a4a8ac" stroke-width=".9"/><rect x="3.5" y="9" width="7" height="4.5" fill="#dde0e3"/><rect x="4.5" y="10" width="1.6" height="2.6" fill="#a4a8ac"/></svg>
<svg class="s" style="left:1413px;top:238px;" width="15" height="14" viewBox="0 0 15 14"><path d="M3.5 .5h5l2 2v3h-7z" fill="#dde0e3" stroke="#a4a8ac"/><rect x=".5" y="5" width="14" height="6.5" rx="1" fill="#c8ccd0" stroke="#a4a8ac"/><rect x="3.5" y="9" width="7.5" height="4.5" fill="#dde0e3" stroke="#a4a8ac"/><rect x="10.5" y="6.3" width="1.2" height="1" fill="#fff"/><rect x="12.2" y="6.3" width="1.2" height="1" fill="#fff"/></svg>
<svg class="s" style="left:1437px;top:238px;" width="15" height="16" viewBox="0 0 15 16"><path d="M.5 .5h7l4 4v9h-11z" fill="#dde0e3" stroke="#a4a8ac"/><circle cx="8" cy="9" r="2.8" fill="#dde0e3" stroke="#9a9ea2" stroke-width="1.4"/><path d="M10 11l3.5 3.6" stroke="#9a9ea2" stroke-width="1.8"/></svg>
<div class="r" style="left:1457px;top:235px;width:1px;height:18px;background:#a8a8a8;"></div>
<div class="r" style="left:1458px;top:235px;width:1px;height:18px;background:#e8e8e8;"></div>
<svg class="s" style="left:1463px;top:236px;" width="17" height="16" viewBox="0 0 17 16"><path d="M4.6 3.2h3.4V1l4 3.3-4 3.3V5.5H4.6a1.15 1.15 0 0 1 0-2.3z" fill="#2cc02c" stroke="#108a10" stroke-width=".8"/><rect x=".8" y="8.8" width="6.4" height="5.4" rx="2" fill="#f8f8f8" stroke="#505050" stroke-width="1.3"/><rect x="8.6" y="8.8" width="6.4" height="5.4" rx="2" fill="#f8f8f8" stroke="#505050" stroke-width="1.3"/><path d="M3 11.5h10" stroke="#505050" stroke-width="1.3"/><path d="M6 11.5h4" stroke="#f8f8f8" stroke-width="1.2"/></svg>
<svg class="s" style="left:1486px;top:236px;" width="17" height="16" viewBox="0 0 17 16"><path d="M2.5 1.5h6.5l3 2.5v4.5h-9.5z" fill="#e0e3e6" stroke="#b8bcc0"/><rect x=".8" y="8.8" width="6.4" height="5.4" rx="2" fill="#e0e3e6" stroke="#b4b8bc" stroke-width="1.3"/><rect x="8.6" y="8.8" width="6.4" height="5.4" rx="2" fill="#e0e3e6" stroke="#b4b8bc" stroke-width="1.3"/><path d="M3 11.5h10" stroke="#b4b8bc" stroke-width="1.3"/><path d="M6 11.5h4" stroke="#e0e3e6" stroke-width="1.2"/></svg>
<div class="r" style="left:1508px;top:235px;width:1px;height:18px;background:#a8a8a8;"></div>
<div class="r" style="left:1509px;top:235px;width:1px;height:18px;background:#e8e8e8;"></div>
<svg class="s" style="left:1514px;top:237px;" width="14" height="16" viewBox="0 0 14 16"><rect x=".6" y=".6" width="12.8" height="13.8" rx="1" fill="#f2f4f6" stroke="#687888" stroke-width="1.1"/><rect x="1.1" y="1.1" width="11.8" height="3.3" fill="#4cc45c"/><rect x="3.2" y="6.4" width="1.5" height="1" fill="#384858"/><rect x="3.2" y="8.6" width="1.5" height="1" fill="#384858"/><rect x="3.2" y="10.8" width="1.5" height="1" fill="#384858"/><rect x="3.2" y="13.0" width="1.5" height="1" fill="#384858"/><rect x="6.1" y="6.4" width="1.5" height="1" fill="#384858"/><rect x="6.1" y="8.6" width="1.5" height="1" fill="#384858"/><rect x="6.1" y="10.8" width="1.5" height="1" fill="#384858"/><rect x="6.1" y="13.0" width="1.5" height="1" fill="#384858"/><rect x="9.0" y="6.4" width="1.5" height="1" fill="#c04040"/><rect x="9.0" y="8.6" width="1.5" height="1" fill="#384858"/><rect x="9.0" y="10.8" width="1.5" height="1" fill="#384858"/><rect x="9.0" y="13.0" width="1.5" height="1" fill="#384858"/></svg>
<svg class="s" style="left:1538px;top:237px;" width="14" height="16" viewBox="0 0 14 16"><rect x=".6" y="1" width="12.8" height="13.6" rx="1" fill="#fbfbfb" stroke="#707880" stroke-width="1.1"/><rect x="1.1" y="1.5" width="11.8" height="2.8" fill="#d89a60"/><path d="M3.5 .3v2.2M10.5 .3v2.2" stroke="#fff" stroke-width="1"/><text x="2.2" y="12.6" font-family="Liberation Sans" font-size="8.6" fill="#303030">31</text></svg>
<div class="r" style="left:1559px;top:235px;width:1px;height:18px;background:#a8a8a8;"></div>
<div class="r" style="left:1560px;top:235px;width:1px;height:18px;background:#e8e8e8;"></div>
<svg class="s" style="left:1568px;top:240px;" width="10" height="10" viewBox="0 0 10 10"><path d="M0 10V0h2.6l2 6.2 2-6.2h2.6v10H7.4V3.6l-2 6.4H3.8l-2-6.4V10z" fill="#bcaea0"/></svg>
<svg class="s" style="left:1588px;top:240px;" width="17" height="10" viewBox="0 0 17 10"><path d="M0 10V0h2.6l2 6.2 2-6.2h2.6v10H7.4V3.6l-2 6.4H3.8l-2-6.4V10z" fill="#bcaea0"/><path d="M9.4 4.6h6M12.4 1.8v5.6" stroke="#b8aa9c" stroke-width="1.6"/></svg>
<svg class="s" style="left:1611px;top:240px;" width="16" height="10" viewBox="0 0 16 10"><path d="M0 10V0h2.6l2 6.2 2-6.2h2.6v10H7.4V3.6l-2 6.4H3.8l-2-6.4V10z" fill="#bcaea0"/><path d="M9.8 4.8h5.6" stroke="#b8aa9c" stroke-width="1.7"/></svg>
<div class="r" style="left:1633px;top:235px;width:1px;height:18px;background:#a8a8a8;"></div>
<div class="r" style="left:1634px;top:235px;width:1px;height:18px;background:#e8e8e8;"></div>
<svg class="s" style="left:1639px;top:238px;" width="16" height="15" viewBox="0 0 16 15"><circle cx="7" cy="6.5" r="5.6" fill="#f4f4f4" stroke="#383838" stroke-width="1.2"/><path d="M7 3.6v5.8M4.1 6.5h5.8" stroke="#101010" stroke-width="1.4"/><path d="M11 10.6l3.6 3.4" stroke="#303030" stroke-width="2.2"/></svg>
<svg class="s" style="left:1663px;top:237px;" width="16" height="15" viewBox="0 0 16 15"><rect x=".6" y=".6" width="14" height="14" rx="1" fill="#fbfbfb" stroke="#708090" stroke-width="1.1"/><rect x="1.1" y="1.1" width="13" height="1.8" fill="#4a90d8"/><path d="M7.6 2.5v12" stroke="#505860" stroke-width="1.1"/></svg>
<div class="r" style="left:1684px;top:235px;width:1px;height:18px;background:#a8a8a8;"></div>
<div class="r" style="left:1685px;top:235px;width:1px;height:18px;background:#e8e8e8;"></div>
<svg class="s" style="left:1691px;top:239px;" width="9" height="10" viewBox="0 0 9 10"><ellipse cx="4.4" cy="2.7" rx="2.3" ry="2.5" fill="#808080" stroke="#383838" stroke-width=".9"/><path d="M.4 9.6c0-2.5 1.6-3.7 4-3.7s4 1.2 4 3.7z" fill="#808080" stroke="#383838" stroke-width=".9"/></svg>
<div class="t" style="left:1704px;top:238.43px;font-size:10.8px;line-height:14px;color:#202020;transform:scaleY(1.12);transform-origin:0 10.57px;">Администратор___</div>
<div class="r" style="left:1805px;top:235px;width:1px;height:18px;background:#a8a8a8;"></div>
<div class="r" style="left:1806px;top:235px;width:1px;height:18px;background:#e8e8e8;"></div>
<svg class="s" style="left:1810px;top:236px;" width="18" height="18" viewBox="0 0 18 18"><defs><radialGradient id="ig" cx="50%" cy="35%" r="65%"><stop offset="0" stop-color="#ffe9a0"/><stop offset="1" stop-color="#f0b030"/></radialGradient></defs><circle cx="9" cy="9" r="8" fill="url(#ig)" stroke="#d09a30" stroke-width=".8"/><circle cx="9" cy="5" r="1.3" fill="#4a3c14"/><path d="M7 7.6h2.8v5.6h1.2v1.3H7v-1.3h1.2V8.9H7z" fill="#4a3c14"/></svg>
<svg class="s" style="left:1833px;top:246.5px;" width="8" height="4" viewBox="0 0 8 4"><path d="M0 0h8l-4 3.6z" fill="#484848"/></svg>
<div class="r" style="left:1845px;top:235px;width:1px;height:18px;background:#a8a8a8;"></div>
<div class="r" style="left:1846px;top:235px;width:1px;height:18px;background:#e8e8e8;"></div>
<div class="r" style="left:1855px;top:247px;width:7px;height:2px;background:#303030;"></div>
<div class="r" style="left:1855px;top:249px;width:7px;height:1px;background:#8a8a8a;"></div>
<svg class="s" style="left:1874px;top:239px;" width="13" height="12" viewBox="0 0 13 12"><rect x="4" y="1.5" width="7.8" height="6.3" fill="none" stroke="#383838" stroke-width="1.1"/><rect x="1.5" y="4.6" width="7.8" height="6.3" fill="#cfd0d2" stroke="#383838" stroke-width="1.1"/><rect x="1" y="4" width="8.8" height="1.8" fill="#383838"/><rect x="3.5" y="1" width="8.8" height="1.6" fill="#383838"/></svg>
<svg class="s" style="left:1897px;top:239px;" width="11" height="11" viewBox="0 0 11 11"><path d="M1.5 1.5l8 8M9.5 1.5l-8 8" stroke="#202020" stroke-width="2.2"/></svg>
<div class="r" style="left:0px;top:232px;width:1px;height:848px;background:#1a1a1a;"></div>
<div class="r" style="left:1px;top:233px;width:1px;height:847px;background:#8a8a8a;"></div>
<div class="r" style="left:2px;top:233px;width:2px;height:847px;background:#d2d2d2;"></div>
<div class="r" style="left:4px;top:254px;width:2px;height:826px;background:#b8b8b8;"></div>
<div class="r" style="left:1919px;top:232px;width:1px;height:848px;background:#1a1a1a;"></div>
<div class="r" style="left:1918px;top:233px;width:1px;height:847px;background:#6a6a6a;"></div>
<div class="r" style="left:1916px;top:254px;width:2px;height:826px;background:#c8c8c8;"></div>
<div class="r" style="left:1914px;top:254px;width:2px;height:826px;background:#ababab;"></div>
<div class="r" style="left:2px;top:233px;width:4px;height:1px;background:#8c8c8c;"></div>
<div class="r" style="left:2px;top:234px;width:2px;height:2px;background:#8c8c8c;"></div>
<div class="r" style="left:2px;top:236px;width:1px;height:2px;background:#8c8c8c;"></div>
<div class="r" style="left:1913px;top:233px;width:5px;height:1px;background:#8c8c8c;"></div>
<div class="r" style="left:1915px;top:234px;width:3px;height:2px;background:#8c8c8c;"></div>
<div class="r" style="left:1917px;top:236px;width:1px;height:3px;background:#8c8c8c;"></div>
<div class="r" style="left:6px;top:267px;width:1908px;height:36px;background:#f2f2f2;"></div>
<div class="r" style="left:6px;top:267px;width:185px;height:36px;background:#e8e8e8;"></div>
<div class="r" style="left:6px;top:303px;width:1908px;height:1px;background:#a6a6a6;"></div>
<div class="r" style="left:191px;top:267px;width:1px;height:36px;background:#a6a6a6;"></div>
<div class="r" style="left:367px;top:267px;width:1px;height:36px;background:#b4b4b4;"></div>
<div class="r" style="left:582px;top:267px;width:1px;height:36px;background:#b4b4b4;"></div>
<div class="r" style="left:844px;top:267px;width:1px;height:36px;background:#b4b4b4;"></div>
<div class="r" style="left:1106px;top:267px;width:1px;height:36px;background:#b4b4b4;"></div>
<div class="r" style="left:845px;top:267px;width:261px;height:36px;background:#ffffff;"></div>
<div class="r" style="left:848px;top:299px;width:255px;height:2px;background:#25774a;"></div>
<svg class="s" style="left:16px;top:276px;" width="18" height="18" viewBox="0 0 18 18"><circle cx="2.6" cy="2.6" r="2.3" fill="#4d4d4d"/><circle cx="2.6" cy="8.4" r="2.3" fill="#4d4d4d"/><circle cx="2.6" cy="14.4" r="2.3" fill="#4d4d4d"/><circle cx="8.6" cy="2.6" r="2.3" fill="#4d4d4d"/><circle cx="8.6" cy="8.4" r="2.3" fill="#4d4d4d"/><circle cx="8.6" cy="14.4" r="2.3" fill="#4d4d4d"/><circle cx="14.6" cy="2.6" r="2.3" fill="#4d4d4d"/><circle cx="14.6" cy="8.4" r="2.3" fill="#4d4d4d"/><circle cx="14.6" cy="14.4" r="2.3" fill="#4d4d4d"/></svg>
<svg class="s" style="left:53px;top:277px;" width="17" height="17" viewBox="0 0 17 17"><path d="M8.4 0.5l2.2 5.3 5.7.3-4.4 3.6 1.5 5.6-5-3.2-5 3.2 1.5-5.6L.5 6.1l5.7-.3z" fill="#4d4d4d"/></svg>
<svg class="s" style="left:90px;top:276px;" width="18" height="18" viewBox="0 0 18 18"><path d="M3.5 1.5H11q2.2 0 2.2 2.2v9.6M5.4 5v7.6q0 2.6 2.6 2.6h6.4" stroke="#4d4d4d" stroke-width="1.6" fill="none"/><circle cx="3.5" cy="3.3" r="2" fill="#e8e8e8" stroke="#4d4d4d" stroke-width="1.4"/><circle cx="14.5" cy="13.4" r="2" fill="#e8e8e8" stroke="#4d4d4d" stroke-width="1.4"/></svg>
<svg class="s" style="left:126px;top:276px;" width="18" height="18" viewBox="0 0 18 18"><circle cx="7.1" cy="6.2" r="4.5" stroke="#4d4d4d" stroke-width="1.4" fill="none"/><path d="M10.4 9.8l5.2 5" stroke="#4d4d4d" stroke-width="2.8"/></svg>
<svg class="s" style="left:163px;top:275px;" width="19" height="19" viewBox="0 0 19 19"><path d="M9.5 1.3C6.2 3 4.6 6 4.6 9.5v2.8l-2 1.9q-.6 1.4 1 1.4h11.8q1.6 0 1-1.4l-2-1.9V9.5c0-3.5-1.6-6.5-4.9-8.2z" stroke="#4d4d4d" stroke-width="1.6" fill="none" stroke-linejoin="round"/><path d="M7.8 16.2h3.4l-1.7 1.7z" fill="#4d4d4d"/></svg>
<svg class="s" style="left:202px;top:278px;" width="17" height="14" viewBox="0 0 17 14"><path d="M8.5 .6L.6 7.4h2.5V13h3.2V9h4.4v4h3.2V7.4h2.5z" fill="#4d4d4d"/><rect x="7.2" y="8.6" width="2.6" height="4.4" fill="#f2f2f2"/></svg>
<div class="t" style="left:228px;top:278.10px;font-size:12.7px;line-height:16px;color:#404040;transform:scaleY(1.1);transform-origin:0 12.20px;">Начальная страница</div>
<div class="t" style="left:378px;top:278.10px;font-size:12.7px;line-height:16px;color:#404040;transform:scaleY(1.1);transform-origin:0 12.20px;">Возвраты товаров от клиентов</div>
<div class="t" style="left:593px;top:278.10px;font-size:12.7px;line-height:16px;color:#404040;transform:scaleY(1.1);transform-origin:0 12.20px;">Проводки регламентированного учета</div>
<div class="t" style="left:855px;top:278.10px;font-size:12.7px;line-height:16px;color:#404040;transform:scaleY(1.1);transform-origin:0 12.20px;">Проводки регламентированного учета</div>
<svg class="s" style="left:565.5px;top:279.5px;" width="10" height="10" viewBox="0 0 10 10"><path d="M1.6 1.6l6.8 6.8M8.4 1.6l-6.8 6.8" stroke="#444" stroke-width="1.6" stroke-linecap="round"/></svg>
<svg class="s" style="left:827.5px;top:279.5px;" width="10" height="10" viewBox="0 0 10 10"><path d="M1.6 1.6l6.8 6.8M8.4 1.6l-6.8 6.8" stroke="#444" stroke-width="1.6" stroke-linecap="round"/></svg>
<svg class="s" style="left:1089.5px;top:279.5px;" width="10" height="10" viewBox="0 0 10 10"><path d="M1.6 1.6l6.8 6.8M8.4 1.6l-6.8 6.8" stroke="#444" stroke-width="1.6" stroke-linecap="round"/></svg>
<div class="r" style="left:6px;top:304px;width:219px;height:776px;background:#fbec9e;"></div>
<div class="r" style="left:224px;top:304px;width:1px;height:776px;background:#fdf08c;"></div>
<div class="r" style="left:225px;top:304px;width:1px;height:776px;background:#c2b25c;"></div>
<div class="t" style="left:52px;top:314.70px;font-size:13px;line-height:16px;color:#3a3a3a;transform:scaleY(1.1);transform-origin:0 12.30px;">Главное</div>
<div class="t" style="left:52px;top:351.43px;font-size:13px;line-height:14.545px;color:#3a3a3a;transform:scaleY(1.1);transform-origin:0 11.57px;">Бюджетирование и<br>планирование</div>
<div class="t" style="left:52px;top:400.70px;font-size:13px;line-height:16px;color:#3a3a3a;transform:scaleY(1.1);transform-origin:0 12.30px;">CRM и маркетинг</div>
<div class="t" style="left:52px;top:435.20px;font-size:13px;line-height:16px;color:#3a3a3a;transform:scaleY(1.1);transform-origin:0 12.30px;">Продажи</div>
<div class="t" style="left:52px;top:470.70px;font-size:13px;line-height:16px;color:#3a3a3a;transform:scaleY(1.1);transform-origin:0 12.30px;">Закупки</div>
<div class="t" style="left:52px;top:505.70px;font-size:13px;line-height:16px;color:#3a3a3a;transform:scaleY(1.1);transform-origin:0 12.30px;">Склад и доставка</div>
<div class="t" style="left:52px;top:540.70px;font-size:13px;line-height:16px;color:#3a3a3a;transform:scaleY(1.1);transform-origin:0 12.30px;">Производство</div>
<div class="t" style="left:52px;top:575.70px;font-size:13px;line-height:16px;color:#3a3a3a;transform:scaleY(1.1);transform-origin:0 12.30px;">Кадры</div>
<div class="t" style="left:52px;top:610.70px;font-size:13px;line-height:16px;color:#3a3a3a;transform:scaleY(1.1);transform-origin:0 12.30px;">Зарплата</div>
<div class="t" style="left:52px;top:645.70px;font-size:13px;line-height:16px;color:#3a3a3a;transform:scaleY(1.1);transform-origin:0 12.30px;">Казначейство</div>
<div class="t" style="left:52px;top:681.43px;font-size:13px;line-height:14.545px;color:#3a3a3a;transform:scaleY(1.1);transform-origin:0 11.57px;">Финансовый результат и<br>контроллинг</div>
<div class="t" style="left:52px;top:731.70px;font-size:13px;line-height:16px;color:#3a3a3a;transform:scaleY(1.1);transform-origin:0 12.30px;">Регламентированный учет</div>
<div class="t" style="left:52px;top:767.43px;font-size:13px;line-height:14.545px;color:#3a3a3a;transform:scaleY(1.1);transform-origin:0 11.57px;">НСИ и<br>администрирование</div>
<svg class="s" style="left:23px;top:315px;" width="14" height="14" viewBox="0 0 14 14"><rect x="0" y="0" width="14" height="2" fill="#45401a"/><rect x="0" y="4" width="14" height="2" fill="#45401a"/><rect x="0" y="8" width="14" height="2" fill="#45401a"/><rect x="0" y="12" width="14" height="2" fill="#45401a"/></svg>
<svg class="s" style="left:22px;top:356px;" width="17" height="17" viewBox="0 0 17 17"><path d="M2.5 2v15M0 14.5h14" stroke="#4a4a4a" stroke-width="1.2"/><path d="M2.5 0l-2.5 3h5z" fill="#4a4a4a"/><path d="M16 14.5l-3-2.5v5z" fill="#4a4a4a"/><path d="M3 12.5l2-1 1 .3 2-1.3 1 .2 2-1" stroke="#4a4a4a" stroke-width="1" fill="none"/><circle cx="11.6" cy="5.2" r="4.6" fill="#4a4a4a"/><path d="M10.6 9V2.8h1.8a1.5 1.5 0 0 1 0 3h-2.8M9 7.4h3.3" stroke="#fbec9e" stroke-width="1" fill="none"/></svg>
<svg class="s" style="left:23px;top:401px;" width="15" height="15" viewBox="0 0 15 15"><path d="M6.3 1A6.8 6.8 0 1 0 14 8.7H6.3z" fill="#4a4a4a"/><path d="M8 0.2A6.8 6.8 0 0 1 14.7 7H8z" fill="#4a4a4a"/></svg>
<svg class="s" style="left:24px;top:435px;" width="13" height="15" viewBox="0 0 13 15"><path d="M3.5 5V3.2a3 3 0 0 1 6 0V5" stroke="#4a4a4a" stroke-width="1.3" fill="none"/><rect x="0" y="4.3" width="13" height="10.7" fill="#4a4a4a"/><path d="M3.5 4.3v2M9.5 4.3v2" stroke="#fbec9e" stroke-width="1.5"/></svg>
<svg class="s" style="left:22px;top:471px;" width="17" height="15" viewBox="0 0 17 15"><path d="M0 1h2.3l1.2 2" stroke="#4a4a4a" stroke-width="1.6" fill="none"/><path d="M2.3 2.8h13.6l-1.3 6.3H3.3z" fill="#4a4a4a"/><path d="M3 9v2h11" stroke="#4a4a4a" stroke-width="1.3" fill="none"/><circle cx="4.5" cy="12.8" r="1.9" fill="#4a4a4a"/><circle cx="12" cy="12.8" r="1.9" fill="#4a4a4a"/></svg>
<svg class="s" style="left:22px;top:506px;" width="16" height="15" viewBox="0 0 16 15"><rect x="1" y="0" width="6" height="5.5" fill="#4a4a4a"/><rect x="8" y="0" width="6" height="5.5" fill="#4a4a4a"/><rect x="1" y="6.5" width="6" height="5.5" fill="#4a4a4a"/><rect x="8" y="6.5" width="6" height="5.5" fill="#4a4a4a"/><rect x="0" y="12.8" width="15" height="1.8" fill="#4a4a4a"/></svg>
<svg class="s" style="left:23px;top:541px;" width="15" height="15" viewBox="0 0 15 15"><path d="M1.3 0h2.3v5.5H1.3zM5.2 0h2.3v3H5.2z" fill="#4a4a4a"/><path d="M0 7.5l7.5-4v3.6l6.5-4.2V14H0z" fill="#4a4a4a"/></svg>
<svg class="s" style="left:24px;top:576px;" width="13" height="14" viewBox="0 0 13 14"><ellipse cx="6.5" cy="3.8" rx="3.2" ry="3.6" fill="#4a4a4a"/><path d="M0 12.2c0-2.6 2-4 4-4.2h5c2 .2 4 1.6 4 4.2V14H0z" fill="#4a4a4a"/></svg>
<svg class="s" style="left:23px;top:613px;" width="15" height="11" viewBox="0 0 15 11"><rect x="0" y="0" width="14" height="2" rx=".5" fill="#45401a"/><rect x="0" y="3.2" width="14" height="6.6" rx=".7" fill="#4a4a4a"/><rect x="9" y="5" width="3.5" height="1" fill="#e8e0b0"/></svg>
<svg class="s" style="left:23px;top:646px;" width="15" height="15" viewBox="0 0 15 15"><circle cx="7" cy="7" r="7" fill="#4a4a4a"/><path d="M5.8 12.2V3.6h2.4a2 2 0 0 1 0 4H4.2M4.2 9.8h4.4" stroke="#fbec9e" stroke-width="1.2" fill="none"/></svg>
<svg class="s" style="left:23px;top:691px;" width="15" height="12" viewBox="0 0 15 12"><rect x="1" y="2" width="2.4" height="8.5" fill="#4a4a4a"/><rect x="5" y="4" width="2.4" height="6.5" fill="#4a4a4a"/><rect x="9.5" y="0" width="2.4" height="10.5" fill="#4a4a4a"/><rect x="0" y="10" width="14" height="1.3" fill="#4a4a4a"/></svg>
<svg class="s" style="left:23px;top:731px;" width="14" height="15" viewBox="0 0 14 15"><rect x="1" y="1" width="9" height="13.5" fill="#4a4a4a"/><rect x="2.5" y="2.5" width="6" height="2.5" fill="#fbec9e"/><rect x="2.0" y="7.0" width="1.3" height="1.2" fill="#fbec9e"/><rect x="2.0" y="9.1" width="1.3" height="1.2" fill="#fbec9e"/><rect x="2.0" y="11.2" width="1.3" height="1.2" fill="#fbec9e"/><rect x="4.2" y="7.0" width="1.3" height="1.2" fill="#fbec9e"/><rect x="4.2" y="9.1" width="1.3" height="1.2" fill="#fbec9e"/><rect x="4.2" y="11.2" width="1.3" height="1.2" fill="#fbec9e"/><rect x="6.4" y="7.0" width="1.3" height="1.2" fill="#fbec9e"/><rect x="6.4" y="9.1" width="1.3" height="1.2" fill="#fbec9e"/><rect x="6.4" y="11.2" width="1.3" height="1.2" fill="#fbec9e"/><rect x="8.600000000000001" y="7.0" width="1.3" height="1.2" fill="#fbec9e"/><rect x="8.600000000000001" y="9.1" width="1.3" height="1.2" fill="#fbec9e"/><rect x="8.600000000000001" y="11.2" width="1.3" height="1.2" fill="#fbec9e"/><rect x="11.5" y="3.5" width="1.3" height="11" fill="#4a4a4a"/></svg>
<svg class="s" style="left:23px;top:774px;" width="15" height="15" viewBox="0 0 15 15"><rect x="11.30" y="5.50" width="3" height="3" fill="#4a4a4a" transform="rotate(0 12.80 7.00)"/><rect x="9.66" y="9.46" width="3" height="3" fill="#4a4a4a" transform="rotate(45 11.16 10.96)"/><rect x="5.70" y="11.10" width="3" height="3" fill="#4a4a4a" transform="rotate(90 7.20 12.60)"/><rect x="1.74" y="9.46" width="3" height="3" fill="#4a4a4a" transform="rotate(135 3.24 10.96)"/><rect x="0.10" y="5.50" width="3" height="3" fill="#4a4a4a" transform="rotate(180 1.60 7.00)"/><rect x="1.74" y="1.54" width="3" height="3" fill="#4a4a4a" transform="rotate(225 3.24 3.04)"/><rect x="5.70" y="-0.10" width="3" height="3" fill="#4a4a4a" transform="rotate(270 7.20 1.40)"/><rect x="9.66" y="1.54" width="3" height="3" fill="#4a4a4a" transform="rotate(315 11.16 3.04)"/><circle cx="7.2" cy="7" r="5" fill="#4a4a4a"/><circle cx="7.2" cy="7" r="2.3" fill="#fbec9e"/></svg>
<div class="r" style="left:226px;top:304px;width:1688px;height:776px;background:#ffffff;"></div>
<div class="btn" style="left:238px;top:316px;width:72px;height:22px;"></div>
<div class="r" style="left:275px;top:317px;width:1px;height:21px;background:#d4d4d4;"></div>
<svg class="s" style="left:248px;top:322.5px;" width="18" height="12" viewBox="0 0 18 12"><path d="M1 6l5.5-5v3.4H16v3.2H6.5V11z" fill="#4a4a4a"/></svg>
<svg class="s" style="left:284px;top:322.5px;" width="18" height="12" viewBox="0 0 18 12"><path d="M17 6l-5.5-5v3.4H2v3.2h9.5V11z" fill="#a8a8a8"/></svg>
<div class="t" style="left:369px;top:319.07px;font-size:18.85px;line-height:22px;color:#000000;-webkit-text-stroke:0.3px #000;">Проводки регламентированного учета</div>
<svg class="s" style="left:1892px;top:320px;" width="11" height="11" viewBox="0 0 11 11"><path d="M1.5 1.5l8 8M9.5 1.5l-8 8" stroke="#404040" stroke-width="1.2"/></svg>
<div class="ybtn" style="left:238px;top:362px;width:177px;height:24px;"></div>
<div class="t" style="left:252px;top:368.24px;font-size:13.2px;line-height:16px;color:#3f3a10;font-weight:700;transform:scaleY(1.1);transform-origin:0 12.36px;letter-spacing:0.1px;">Отразить в регл. учете</div>
<div class="btn" style="left:468px;top:362px;width:28px;height:24px;"></div>
<svg class="s" style="left:474px;top:367px;" width="17" height="17" viewBox="0 0 17 17"><path d="M12.6 4.6A5.3 5.3 0 1 0 14.3 8.6" stroke="#3c9c44" stroke-width="1.5" fill="none"/><path d="M10.2 2.2h4.6v4.6z" fill="#3c9c44"/></svg>
<div class="btn" style="left:507px;top:362px;width:40px;height:24px;"></div>
<svg class="s" style="left:513px;top:366px;" width="20" height="19" viewBox="0 0 20 19"><rect x="1.5" y="1.5" width="8" height="9" fill="#f8f8f8" stroke="#6a7078"/><path d="M3 3.9h5" stroke="#a8b0b8"/><rect x="8.5" y="7.5" width="8" height="9" fill="#f8f8f8" stroke="#6a7078"/><path d="M11 11.5h4M11 13.5h4" stroke="#a8b0b8"/><path d="M4.3 5.6c0-1 1.1-1.3 1.7-.6l1 1.2.3-.9c.5-.6 1.4-.6 1.9 0l3.6 3.8c.6.6.6 1.3 0 1.9l-2.9 3c-.6.6-1.3.6-1.8 0L4.6 8.4c-.3-.4-.4-.8-.3-1.2z" fill="#35c878" stroke="#1f8a50" stroke-width=".7"/></svg>
<svg class="s" style="left:536.5px;top:375px;" width="6" height="4" viewBox="0 0 6 4"><path d="M0 0h6l-3 3z" fill="#383838"/></svg>
<div class="cb" style="left:560px;top:368px;width:12px;height:12px;"></div>
<div class="t" style="left:581px;top:369.00px;font-size:12.7px;line-height:16px;color:#404040;transform:scaleY(1.1);transform-origin:0 12.20px;">Ручная корректировка проводок</div>
<div class="btn" style="left:1795px;top:362px;width:59px;height:24px;"></div>
<div class="t" style="left:1809px;top:367.50px;font-size:13px;line-height:16px;color:#404040;transform:scaleY(1.1);transform-origin:0 12.30px;">Еще</div>
<svg class="s" style="left:1843px;top:374px;" width="7" height="4" viewBox="0 0 7 4"><path d="M0 0h7l-3.5 4z" fill="#404040"/></svg>
<div class="btn" style="left:1865px;top:362px;width:28px;height:24px;"></div>
<div class="t" style="left:1875.5px;top:368.37px;font-size:14px;line-height:16px;color:#111111;font-weight:700;">?</div>
<div class="r" style="left:239px;top:400px;width:379px;height:17px;border:1px dotted #303030;box-sizing:border-box;"></div>
<div class="t" style="left:240px;top:401.29px;font-size:12.75px;line-height:16px;color:#28496a;transform:scaleY(1.1);transform-origin:0 12.21px;color:#28496a;text-decoration:underline;text-underline-offset:1px;text-decoration-skip-ink:none;">Возврат товаров от клиента СК00-000720 от 05.09.2017 9:46:58</div>
<div class="t" style="left:238px;top:437.17px;font-size:12.8px;line-height:16px;color:#4a7282;transform:scaleY(1.1);transform-origin:0 12.23px;">Ожидает отражения в учете</div>
<div class="r" style="left:0px;top:232px;width:1920px;height:1px;background:#7a7a7a;"></div>
<div class="r" style="left:238px;top:470px;width:1657px;height:610px;background:#ffffff;"></div>
<div class="r" style="left:240px;top:472px;width:1653px;height:60px;background:#f1f1f1;"></div>
<div class="r" style="left:238px;top:470px;width:1657px;height:1px;background:#a0a0a0;"></div>
<div class="r" style="left:238px;top:470px;width:1px;height:610px;background:#a0a0a0;"></div>
<div class="r" style="left:1894px;top:470px;width:1px;height:610px;background:#a0a0a0;"></div>
<div class="r" style="left:239px;top:500px;width:478px;height:3px;background:#ffffff;"></div>
<div class="r" style="left:239px;top:501px;width:478px;height:1px;background:#cbcbcb;"></div>
<div class="r" style="left:903px;top:500px;width:316px;height:3px;background:#ffffff;"></div>
<div class="r" style="left:903px;top:501px;width:316px;height:1px;background:#cbcbcb;"></div>
<div class="r" style="left:1405px;top:500px;width:143px;height:3px;background:#ffffff;"></div>
<div class="r" style="left:1405px;top:501px;width:143px;height:1px;background:#cbcbcb;"></div>
<div class="r" style="left:460px;top:471px;width:3px;height:30px;background:#ffffff;"></div>
<div class="r" style="left:461px;top:471px;width:1px;height:30px;background:#cbcbcb;"></div>
<div class="r" style="left:543px;top:471px;width:3px;height:61px;background:#ffffff;"></div>
<div class="r" style="left:544px;top:471px;width:1px;height:61px;background:#cbcbcb;"></div>
<div class="r" style="left:716px;top:471px;width:3px;height:61px;background:#ffffff;"></div>
<div class="r" style="left:717px;top:471px;width:1px;height:61px;background:#cbcbcb;"></div>
<div class="r" style="left:902px;top:471px;width:3px;height:61px;background:#ffffff;"></div>
<div class="r" style="left:903px;top:471px;width:1px;height:61px;background:#cbcbcb;"></div>
<div class="r" style="left:1045px;top:471px;width:3px;height:61px;background:#ffffff;"></div>
<div class="r" style="left:1046px;top:471px;width:1px;height:61px;background:#cbcbcb;"></div>
<div class="r" style="left:1218px;top:471px;width:3px;height:61px;background:#ffffff;"></div>
<div class="r" style="left:1219px;top:471px;width:1px;height:61px;background:#cbcbcb;"></div>
<div class="r" style="left:1404px;top:471px;width:3px;height:61px;background:#ffffff;"></div>
<div class="r" style="left:1405px;top:471px;width:1px;height:61px;background:#cbcbcb;"></div>
<div class="r" style="left:1547px;top:471px;width:3px;height:61px;background:#ffffff;"></div>
<div class="r" style="left:1548px;top:471px;width:1px;height:61px;background:#cbcbcb;"></div>
<div class="r" style="left:1710px;top:471px;width:3px;height:61px;background:#ffffff;"></div>
<div class="r" style="left:1711px;top:471px;width:1px;height:61px;background:#cbcbcb;"></div>
<div class="r" style="left:1883px;top:471px;width:3px;height:61px;background:#ffffff;"></div>
<div class="r" style="left:1884px;top:471px;width:1px;height:61px;background:#cbcbcb;"></div>
<div class="r" style="left:239px;top:501px;width:478px;height:1px;background:#cbcbcb;"></div>
<div class="r" style="left:903px;top:501px;width:316px;height:1px;background:#cbcbcb;"></div>
<div class="r" style="left:1405px;top:501px;width:143px;height:1px;background:#cbcbcb;"></div>
<div class="r" style="left:239px;top:531px;width:1655px;height:3px;background:#ffffff;"></div>
<div class="r" style="left:239px;top:532px;width:1655px;height:1px;background:#cbcbcb;"></div>
<div class="t" style="left:255px;top:477.80px;font-size:12.7px;line-height:16px;color:#4a4a4a;transform:scaleY(1.1);transform-origin:0 12.20px;">Дата</div>
<div class="t" style="left:478px;top:477.80px;font-size:12.7px;line-height:16px;color:#4a4a4a;transform:scaleY(1.1);transform-origin:0 12.20px;">N</div>
<div class="t" style="left:561.5px;top:477.80px;font-size:12.7px;line-height:16px;color:#333333;font-weight:700;transform:scaleY(1.1);transform-origin:0 12.20px;">Счет Дт</div>
<div class="t" style="left:734px;top:477.80px;font-size:12.7px;line-height:16px;color:#4a4a4a;transform:scaleY(1.1);transform-origin:0 12.20px;">Субконто Дт</div>
<div class="t" style="left:920px;top:477.80px;font-size:12.7px;line-height:16px;color:#4a4a4a;transform:scaleY(1.1);transform-origin:0 12.20px;">Количество Дт</div>
<div class="t" style="left:1063px;top:477.80px;font-size:12.7px;line-height:16px;color:#333333;font-weight:700;transform:scaleY(1.1);transform-origin:0 12.20px;">Счет Кт</div>
<div class="t" style="left:1236px;top:477.80px;font-size:12.7px;line-height:16px;color:#4a4a4a;transform:scaleY(1.1);transform-origin:0 12.20px;">Субконто Кт</div>
<div class="t" style="left:1422px;top:477.80px;font-size:12.7px;line-height:16px;color:#4a4a4a;transform:scaleY(1.1);transform-origin:0 12.20px;">Количество Кт</div>
<div class="t" style="left:1565.5px;top:477.80px;font-size:12.7px;line-height:16px;color:#333333;font-weight:700;transform:scaleY(1.1);transform-origin:0 12.20px;">Сумма БУ (руб.)</div>
<div class="t" style="left:1728.5px;top:477.80px;font-size:12.7px;line-height:16px;color:#4a4a4a;transform:scaleY(1.1);transform-origin:0 12.20px;">Содержание</div>
<div class="t" style="left:255px;top:508.80px;font-size:12.7px;line-height:16px;color:#4a4a4a;transform:scaleY(1.1);transform-origin:0 12.20px;">Организация</div>
<div class="t" style="left:561.5px;top:508.80px;font-size:12.7px;line-height:16px;color:#4a4a4a;transform:scaleY(1.1);transform-origin:0 12.20px;">Подразделение Дт</div>
<div class="t" style="left:920px;top:508.80px;font-size:12.7px;line-height:16px;color:#4a4a4a;transform:scaleY(1.1);transform-origin:0 12.20px;">Валюта Дт</div>
<div class="t" style="left:1063px;top:508.80px;font-size:12.7px;line-height:16px;color:#4a4a4a;transform:scaleY(1.1);transform-origin:0 12.20px;">Подразделение Кт</div>
<div class="t" style="left:1422px;top:508.80px;font-size:12.7px;line-height:16px;color:#4a4a4a;transform:scaleY(1.1);transform-origin:0 12.20px;">Валюта Кт</div>
<div class="r" style="left:239px;top:533px;width:1655px;height:86px;background:#ffffff;"></div>
<div class="r" style="left:240px;top:534px;width:1653px;height:85px;background:#f9f9f9;"></div>
<div class="r" style="left:239px;top:619px;width:1655px;height:1px;background:#e3e3e3;"></div>
<div class="r" style="left:239px;top:706px;width:1655px;height:1px;background:#e3e3e3;"></div>
<div class="r" style="left:239px;top:707px;width:1655px;height:86px;background:#ffffff;"></div>
<div class="r" style="left:240px;top:708px;width:1653px;height:85px;background:#fdf6d0;"></div>
<div class="r" style="left:239px;top:793px;width:1655px;height:1px;background:#dedede;"></div>
<div class="r" style="left:461px;top:708px;width:1px;height:27px;background:#ffffff;"></div>
<div class="r" style="left:544px;top:708px;width:1px;height:85px;background:#ffffff;"></div>
<div class="r" style="left:717px;top:708px;width:1px;height:85px;background:#ffffff;"></div>
<div class="r" style="left:903px;top:708px;width:1px;height:85px;background:#ffffff;"></div>
<div class="r" style="left:1046px;top:708px;width:1px;height:85px;background:#ffffff;"></div>
<div class="r" style="left:1219px;top:708px;width:1px;height:85px;background:#ffffff;"></div>
<div class="r" style="left:1405px;top:708px;width:1px;height:85px;background:#ffffff;"></div>
<div class="r" style="left:1548px;top:708px;width:1px;height:85px;background:#ffffff;"></div>
<div class="r" style="left:1711px;top:708px;width:1px;height:85px;background:#ffffff;"></div>
<div class="r" style="left:1884px;top:708px;width:1px;height:85px;background:#ffffff;"></div>
<div class="r" style="left:239px;top:735px;width:807px;height:1px;background:#ffffff;"></div>
<div class="r" style="left:1219px;top:735px;width:329px;height:1px;background:#ffffff;"></div>
<div class="r" style="left:717px;top:764px;width:329px;height:1px;background:#ffffff;"></div>
<div class="r" style="left:1219px;top:764px;width:329px;height:1px;background:#ffffff;"></div>
<div class="r" style="left:1047px;top:735px;width:172px;height:1px;background:#fdf6d0;"></div>
<div class="r" style="left:239px;top:735px;width:0px;height:0px;background:#ffffff;"></div>
<div class="r" style="left:718px;top:736px;width:185px;height:28px;background:#fdefa2;"></div>
<svg class="s" style="left:254px;top:539px;" width="18" height="16" viewBox="0 0 18 16"><path d="M1.6 7.3l2.2-6.3h2v6.3M.8 7h6.2M1.3 7v1.3M6.3 7v1.3" stroke="#1f7d45" stroke-width="1.2" fill="none"/><path d="M7.2 1.9h4.6M9.5 1.9v5.6" stroke="#1f7d45" stroke-width="1.3" fill="none"/><path d="M7.6 9.2v5.6M7.9 12l2.8-2.8M8.4 11.6l2.6 3.2" stroke="#c44a4a" stroke-width="1.3" fill="none"/><path d="M12 10.2h4.8M14.4 10.2v4.6" stroke="#c44a4a" stroke-width="1.3" fill="none"/></svg>
<div class="t" style="left:286.5px;top:539.80px;font-size:12.7px;line-height:16px;color:#333333;transform:scaleY(1.1);transform-origin:0 12.20px;">05.09.2017 9:46:58</div>
<div class="t" style="right:1393px;top:539.80px;font-size:12.7px;line-height:16px;color:#333333;text-align:right;transform:scaleY(1.1);transform-origin:0 12.20px;">1</div>
<svg class="s" style="left:254px;top:626px;" width="18" height="16" viewBox="0 0 18 16"><path d="M1.6 7.3l2.2-6.3h2v6.3M.8 7h6.2M1.3 7v1.3M6.3 7v1.3" stroke="#1f7d45" stroke-width="1.2" fill="none"/><path d="M7.2 1.9h4.6M9.5 1.9v5.6" stroke="#1f7d45" stroke-width="1.3" fill="none"/><path d="M7.6 9.2v5.6M7.9 12l2.8-2.8M8.4 11.6l2.6 3.2" stroke="#c44a4a" stroke-width="1.3" fill="none"/><path d="M12 10.2h4.8M14.4 10.2v4.6" stroke="#c44a4a" stroke-width="1.3" fill="none"/></svg>
<div class="t" style="left:286.5px;top:626.80px;font-size:12.7px;line-height:16px;color:#333333;transform:scaleY(1.1);transform-origin:0 12.20px;">05.09.2017 9:46:58</div>
<div class="t" style="right:1393px;top:626.80px;font-size:12.7px;line-height:16px;color:#333333;text-align:right;transform:scaleY(1.1);transform-origin:0 12.20px;">2</div>
<svg class="s" style="left:254px;top:713px;" width="18" height="16" viewBox="0 0 18 16"><path d="M1.6 7.3l2.2-6.3h2v6.3M.8 7h6.2M1.3 7v1.3M6.3 7v1.3" stroke="#1f7d45" stroke-width="1.2" fill="none"/><path d="M7.2 1.9h4.6M9.5 1.9v5.6" stroke="#1f7d45" stroke-width="1.3" fill="none"/><path d="M7.6 9.2v5.6M7.9 12l2.8-2.8M8.4 11.6l2.6 3.2" stroke="#c44a4a" stroke-width="1.3" fill="none"/><path d="M12 10.2h4.8M14.4 10.2v4.6" stroke="#c44a4a" stroke-width="1.3" fill="none"/></svg>
<div class="t" style="left:286.5px;top:713.80px;font-size:12.7px;line-height:16px;color:#333333;transform:scaleY(1.1);transform-origin:0 12.20px;">05.09.2017 9:46:58</div>
<div class="t" style="right:1393px;top:713.80px;font-size:12.7px;line-height:16px;color:#333333;text-align:right;transform:scaleY(1.1);transform-origin:0 12.20px;">3</div>
<div class="t" style="left:561px;top:539.80px;font-size:12.7px;line-height:16px;color:#333333;font-weight:700;transform:scaleY(1.1);transform-origin:0 12.20px;">62.01</div>
<div class="t" style="left:287px;top:568.80px;font-size:12.7px;line-height:16px;color:#333333;transform:scaleY(1.1);transform-origin:0 12.20px;">ОС</div>
<div class="t" style="left:310px;top:568.80px;font-size:12.7px;line-height:16px;color:#333333;transform:scaleY(1.1);transform-origin:0 12.20px;"><span style="font-size:9px">-  .  .  .  ..</span></div>
<div class="t" style="left:366px;top:568.80px;font-size:12.7px;line-height:16px;color:#333333;transform:scaleY(1.1);transform-origin:0 12.20px;">Б</div>
<div class="r" style="left:368px;top:569px;width:10px;height:6px;background:#ffffff;"></div>
<div class="t" style="left:383px;top:568.80px;font-size:12.7px;line-height:16px;color:#333333;transform:scaleY(1.1);transform-origin:0 12.20px;">"</div>
<div class="t" style="left:561px;top:568.80px;font-size:12.7px;line-height:16px;color:#333333;transform:scaleY(1.1);transform-origin:0 12.20px;">3</div>
<div class="t" style="left:579px;top:568.80px;font-size:12.7px;line-height:16px;color:#333333;transform:scaleY(1.1);transform-origin:0 12.20px;">к</div>
<div class="t" style="left:616px;top:568.80px;font-size:12.7px;line-height:16px;color:#333333;transform:scaleY(1.1);transform-origin:0 12.20px;">еı</div>
<div class="t" style="left:640px;top:568.80px;font-size:12.7px;line-height:16px;color:#333333;transform:scaleY(1.1);transform-origin:0 12.20px;">(отдел</div>
<div class="t" style="left:561px;top:584.80px;font-size:12.7px;line-height:16px;color:#333333;transform:scaleY(1.1);transform-origin:0 12.20px;">продаж)</div>
<div class="t" style="left:734px;top:539.80px;font-size:12.7px;line-height:16px;color:#333333;transform:scaleY(1.1);transform-origin:0 12.20px;">Частное лицо</div>
<div class="t" style="left:734px;top:568.80px;font-size:12.7px;line-height:16px;color:#b4b4b4;transform:scaleY(1.1);transform-origin:0 12.20px;">&lt;Договоры&gt;</div>
<div class="t" style="left:1063px;top:539.80px;font-size:12.7px;line-height:16px;color:#333333;font-weight:700;transform:scaleY(1.1);transform-origin:0 12.20px;">90.01.1</div>
<div class="t" style="left:1063px;top:568.80px;font-size:12.7px;line-height:16px;color:#333333;transform:scaleY(1.1);transform-origin:0 12.20px;">32</div>
<div class="r" style="left:1057px;top:573px;width:10px;height:10px;background:#ffffff;"></div>
<div class="t" style="left:1084px;top:568.80px;font-size:12.7px;line-height:16px;color:#333333;transform:scaleY(1.1);transform-origin:0 12.20px;">с</div>
<div class="t" style="left:1104px;top:568.80px;font-size:12.7px;line-height:16px;color:#333333;transform:scaleY(1.1);transform-origin:0 12.20px;">п.</div>
<div class="t" style="left:1120.5px;top:568.80px;font-size:12.7px;line-height:16px;color:#333333;transform:scaleY(1.1);transform-origin:0 12.20px;">экс (отдел</div>
<div class="r" style="left:1118px;top:570px;width:5px;height:12px;background:#f9f9f9;"></div>
<div class="t" style="left:1063px;top:584.80px;font-size:12.7px;line-height:16px;color:#333333;transform:scaleY(1.1);transform-origin:0 12.20px;">продаж)</div>
<div class="t" style="left:1236px;top:539.80px;font-size:12.7px;line-height:16px;color:#333333;transform:scaleY(1.1);transform-origin:0 12.20px;">Товар</div>
<div class="t" style="left:1236px;top:568.80px;font-size:12.7px;line-height:16px;color:#333333;transform:scaleY(1.1);transform-origin:0 12.20px;">18%</div>
<div class="t" style="left:1236px;top:597.80px;font-size:12.7px;line-height:16px;color:#333333;transform:scaleY(1.1);transform-origin:0 12.20px;">Терминус П-обр 320х70...</div>
<div class="t" style="right:389px;top:539.80px;font-size:12.7px;line-height:16px;color:#333333;text-align:right;transform:scaleY(1.1);transform-origin:0 12.20px;">-1,000</div>
<div class="t" style="right:226px;top:539.80px;font-size:12.7px;line-height:16px;color:#c80000;text-align:right;font-weight:700;transform:scaleY(1.1);transform-origin:0 12.20px;">-1 390,00</div>
<div class="t" style="left:1728.5px;top:539.80px;font-size:12.7px;line-height:16px;color:#333333;transform:scaleY(1.1);transform-origin:0 12.20px;">Выручка от</div>
<div class="t" style="left:1728.5px;top:555.80px;font-size:12.7px;line-height:16px;color:#333333;transform:scaleY(1.1);transform-origin:0 12.20px;">реализации</div>
<div class="t" style="left:1728.5px;top:571.80px;font-size:12.7px;line-height:16px;color:#333333;transform:scaleY(1.1);transform-origin:0 12.20px;">собственного товара</div>
<div class="t" style="left:1728.5px;top:587.80px;font-size:12.7px;line-height:16px;color:#333333;transform:scaleY(1.1);transform-origin:0 12.20px;">(сторно)</div>
<div class="t" style="left:561px;top:626.80px;font-size:12.7px;line-height:16px;color:#333333;font-weight:700;transform:scaleY(1.1);transform-origin:0 12.20px;">62.02</div>
<div class="t" style="left:287px;top:655.80px;font-size:12.7px;line-height:16px;color:#333333;transform:scaleY(1.1);transform-origin:0 12.20px;">ООО</div>
<div class="t" style="left:350px;top:650.80px;font-size:12.7px;line-height:16px;color:#333333;transform:scaleY(1.1);transform-origin:0 12.20px;"><span style="font-size:8px">^ ı ¨</span></div>
<div class="t" style="left:561px;top:655.80px;font-size:12.7px;line-height:16px;color:#333333;transform:scaleY(1.1);transform-origin:0 12.20px;">ɔ</div>
<div class="t" style="left:581px;top:655.80px;font-size:12.7px;line-height:16px;color:#333333;transform:scaleY(1.1);transform-origin:0 12.20px;">&lt;о</div>
<div class="t" style="left:601.5px;top:655.80px;font-size:12.7px;line-height:16px;color:#333333;transform:scaleY(1.1);transform-origin:0 12.20px;">ı</div>
<div class="t" style="left:622.5px;top:655.80px;font-size:12.7px;line-height:16px;color:#333333;transform:scaleY(1.1);transform-origin:0 12.20px;">кс (отдел</div>
<div class="t" style="left:561px;top:671.80px;font-size:12.7px;line-height:16px;color:#333333;transform:scaleY(1.1);transform-origin:0 12.20px;">продаж)</div>
<div class="t" style="left:734px;top:626.80px;font-size:12.7px;line-height:16px;color:#333333;transform:scaleY(1.1);transform-origin:0 12.20px;">Частное лицо</div>
<div class="t" style="left:734px;top:655.80px;font-size:12.7px;line-height:16px;color:#b4b4b4;transform:scaleY(1.1);transform-origin:0 12.20px;">&lt;Договоры&gt;</div>
<div class="t" style="left:1063px;top:626.80px;font-size:12.7px;line-height:16px;color:#333333;font-weight:700;transform:scaleY(1.1);transform-origin:0 12.20px;">62.01</div>
<div class="t" style="left:1082px;top:655.80px;font-size:12.7px;line-height:16px;color:#333333;transform:scaleY(1.1);transform-origin:0 12.20px;"><span style="font-size:9px">.~~</span></div>
<div class="t" style="left:1113px;top:655.80px;font-size:12.7px;line-height:16px;color:#333333;transform:scaleY(1.1);transform-origin:0 12.20px;">ıε</div>
<div class="t" style="left:1130.5px;top:655.80px;font-size:12.7px;line-height:16px;color:#333333;transform:scaleY(1.1);transform-origin:0 12.20px;">с (отдел</div>
<div class="t" style="left:1063px;top:671.80px;font-size:12.7px;line-height:16px;color:#333333;transform:scaleY(1.1);transform-origin:0 12.20px;">продаж)</div>
<div class="t" style="left:1236px;top:626.80px;font-size:12.7px;line-height:16px;color:#333333;transform:scaleY(1.1);transform-origin:0 12.20px;">Частное лицо</div>
<div class="t" style="left:1236px;top:655.80px;font-size:12.7px;line-height:16px;color:#b4b4b4;transform:scaleY(1.1);transform-origin:0 12.20px;">&lt;Договоры&gt;</div>
<div class="t" style="right:226px;top:626.80px;font-size:12.7px;line-height:16px;color:#c80000;text-align:right;font-weight:700;transform:scaleY(1.1);transform-origin:0 12.20px;">-1 390,00</div>
<div class="t" style="left:1728.5px;top:626.80px;font-size:12.7px;line-height:16px;color:#333333;transform:scaleY(1.1);transform-origin:0 12.20px;">Восстановление</div>
<div class="t" style="left:1728.5px;top:642.80px;font-size:12.7px;line-height:16px;color:#333333;transform:scaleY(1.1);transform-origin:0 12.20px;">авансов клиентов</div>
<div class="t" style="left:561px;top:713.80px;font-size:12.7px;line-height:16px;color:#333333;font-weight:700;transform:scaleY(1.1);transform-origin:0 12.20px;">90.03</div>
<div class="t" style="left:287px;top:742.80px;font-size:12.7px;line-height:16px;color:#333333;transform:scaleY(1.1);transform-origin:0 12.20px;">ООО "С</div>
<div class="r" style="left:327px;top:741px;width:46px;height:13px;background:#ffffff;"></div>
<div class="t" style="left:336px;top:742.80px;font-size:12.7px;line-height:16px;color:#333333;transform:scaleY(1.1);transform-origin:0 12.20px;"><span style="font-size:8px">.  .  .  ..  .</span></div>
<div class="t" style="left:373px;top:742.80px;font-size:12.7px;line-height:16px;color:#333333;transform:scaleY(1.1);transform-origin:0 12.20px;">А</div>
<div class="r" style="left:382px;top:742px;width:10px;height:8px;background:#ffffff;"></div>
<div class="t" style="left:561px;top:742.80px;font-size:12.7px;line-height:16px;color:#333333;transform:scaleY(1.1);transform-origin:0 12.20px;">3</div>
<div class="r" style="left:565px;top:745px;width:4px;height:6px;background:#fdf6d0;"></div>
<div class="r" style="left:570px;top:746px;width:26px;height:12px;background:#ffffff;"></div>
<div class="t" style="left:593px;top:742.80px;font-size:12.7px;line-height:16px;color:#333333;transform:scaleY(1.1);transform-origin:0 12.20px;">ı</div>
<div class="r" style="left:597px;top:745px;width:38px;height:13px;background:#ffffff;"></div>
<div class="t" style="left:640px;top:742.80px;font-size:12.7px;line-height:16px;color:#333333;transform:scaleY(1.1);transform-origin:0 12.20px;">(отдел</div>
<div class="t" style="left:561px;top:758.80px;font-size:12.7px;line-height:16px;color:#333333;transform:scaleY(1.1);transform-origin:0 12.20px;">продаж)</div>
<div class="t" style="left:734px;top:713.80px;font-size:12.7px;line-height:16px;color:#333333;transform:scaleY(1.1);transform-origin:0 12.20px;">Товар</div>
<div class="t" style="left:734px;top:742.80px;font-size:12.7px;line-height:16px;color:#333333;transform:scaleY(1.1);transform-origin:0 12.20px;">18%</div>
<div class="t" style="left:1063px;top:713.80px;font-size:12.7px;line-height:16px;color:#333333;font-weight:700;transform:scaleY(1.1);transform-origin:0 12.20px;">19.03</div>
<div class="t" style="left:1236px;top:713.80px;font-size:12.7px;line-height:16px;color:#333333;transform:scaleY(1.1);transform-origin:0 12.20px;">С</div>
<div class="t" style="left:1248px;top:713.80px;font-size:12.7px;line-height:16px;color:#333333;transform:scaleY(1.1);transform-origin:0 12.20px;"><span style="font-size:9px">_∕∖   ı∖  ıÑ  ˎ</span></div>
<div class="r" style="left:1246px;top:712px;width:22px;height:11px;background:#ffffff;"></div>
<div class="r" style="left:1262px;top:714px;width:25px;height:15px;background:#ffffff;"></div>
<div class="r" style="left:1292px;top:712px;width:46px;height:11px;background:#ffffff;"></div>
<div class="r" style="left:1315px;top:722px;width:11px;height:7px;background:#ffffff;"></div>
<div class="t" style="left:1236px;top:742.80px;font-size:12.7px;line-height:16px;color:#333333;transform:scaleY(1.1);transform-origin:0 12.20px;">Реализация товаров и ...</div>
<div class="t" style="right:226px;top:713.80px;font-size:12.7px;line-height:16px;color:#c80000;text-align:right;font-weight:700;transform:scaleY(1.1);transform-origin:0 12.20px;">-212,03</div>
<div class="t" style="left:1728.5px;top:713.80px;font-size:12.7px;line-height:16px;color:#333333;transform:scaleY(1.1);transform-origin:0 12.20px;">Входящий НДС</div>
<div class="t" style="left:1728.5px;top:729.80px;font-size:12.7px;line-height:16px;color:#333333;transform:scaleY(1.1);transform-origin:0 12.20px;">(сторно)</div>
</body></html>
